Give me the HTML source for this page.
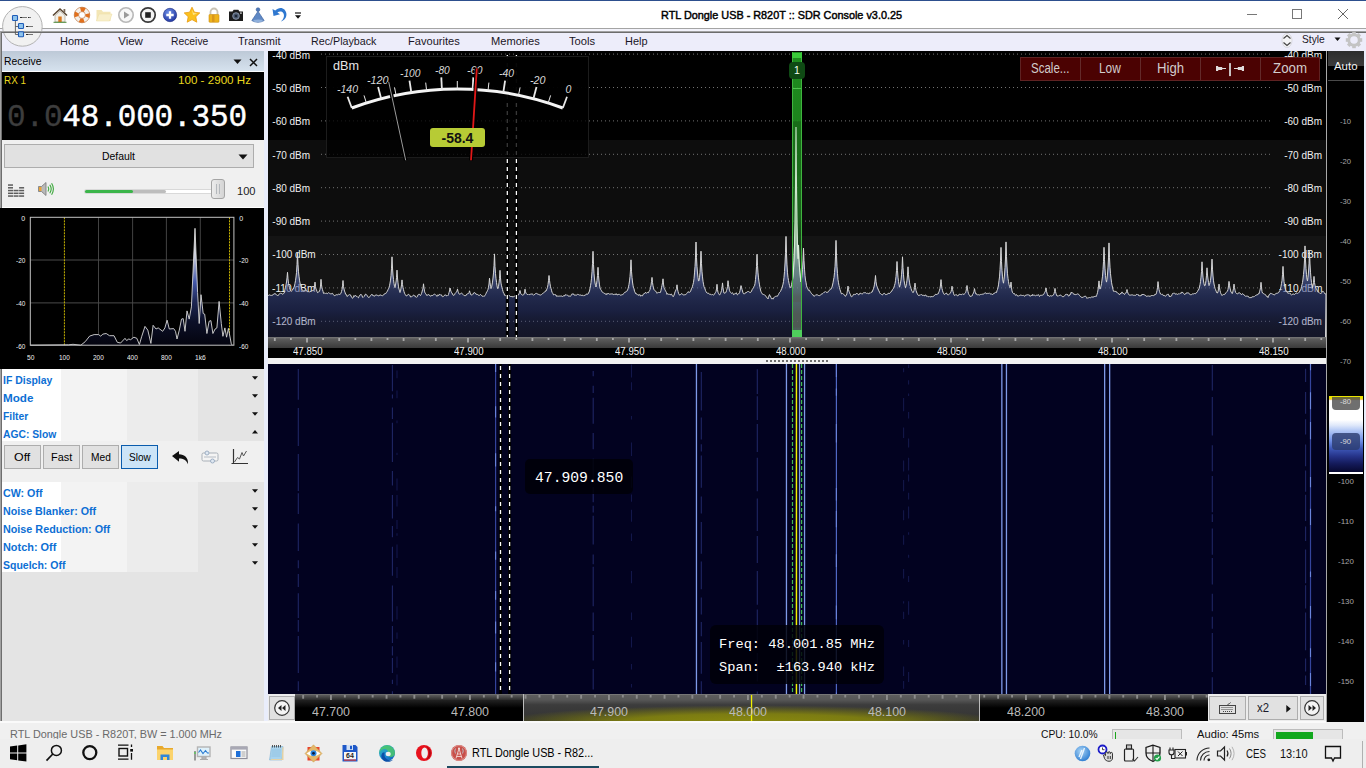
<!DOCTYPE html><html><head><meta charset="utf-8"><title>RTL Dongle USB - R820T :: SDR Console v3.0.25</title><style>
*{margin:0;padding:0;box-sizing:border-box}
html,body{width:1366px;height:768px;overflow:hidden;background:#f0f0f0;font-family:"Liberation Sans",sans-serif}
.r{position:absolute}
.t{position:absolute;white-space:nowrap;display:block}
svg{position:absolute;overflow:visible}
</style></head><body>
<div class="r" style="left:0px;top:0px;width:1366px;height:28px;background:#fff;"></div>
<div class="r" style="left:0px;top:0px;width:1366px;height:1px;background:#2d4f8e;"></div>
<div class="r" style="left:0px;top:28px;width:1366px;height:1px;background:#a4a4a4;"></div>
<div class="r" style="left:0px;top:29px;width:1366px;height:2px;background:#f3f3fb;"></div>
<div class="r" style="left:0px;top:33px;width:1366px;height:18px;background:#ededfa;"></div>
<div class="r" style="left:0px;top:31px;width:1366px;height:1px;background:#a2a2a2;"></div>
<div class="r" style="left:0px;top:32px;width:1366px;height:1px;background:#6c6c6c;"></div>
<span class="t" style='left:660.50px;top:10.00px;font:11.5px/11.5px "Liberation Sans",sans-serif;color:#000;transform:scaleX(0.9434);transform-origin:0 0;-webkit-text-stroke:0.45px #000;'>RTL Dongle USB - R820T :: SDR Console v3.0.25</span>
<svg style="left:0;top:0" width="50" height="50" viewBox="0 0 50 50"><circle cx="22.400" cy="26.400" r="19.800" fill="#f1f1f1" stroke="#b2b2b2" stroke-width="1"/></svg>
<div class="r" style="left:2px;top:31px;width:42px;height:1px;background:#a2a2a2;"></div>
<div class="r" style="left:2px;top:32px;width:42px;height:1px;background:#6c6c6c;"></div>
<svg style="left:0;top:0" width="50" height="50" viewBox="0 0 50 50"><path d="M15.400 20.500v14h3M15.400 26.500h3" stroke="#5a5a5a" stroke-width="0.900" fill="none"/><rect x="12.500" y="15.500" width="5" height="5" rx="0.800" fill="#8fc4ec" stroke="#1f5cb8" stroke-width="1.100"/><rect x="18.500" y="23.500" width="5" height="5" rx="0.800" fill="#8fc4ec" stroke="#1f5cb8" stroke-width="1.100"/><rect x="18.500" y="31.800" width="5" height="5" rx="0.800" fill="#8fc4ec" stroke="#1f5cb8" stroke-width="1.100"/><path d="M20 17.500h7M28 17.500h3M26 26.500h7M26 34.500h7" stroke="#555" stroke-width="0.800"/><path d="M20 17.500h2M28 17.500h1M26 26.500h2M26 34.500h2" stroke="#222" stroke-width="0.900"/></svg>
<svg style="left:51.0px;top:6.0px" width="18" height="18" viewBox="0 0 18 18"><path d="M2 9.500L9 3l7 6.500" fill="none" stroke="#5a4632" stroke-width="1.600"/><path d="M4 9.500L9 5l5 4.500V16H4z" fill="#f3efe6" stroke="#9a9384" stroke-width="0.600"/><rect x="7.300" y="10.500" width="3.400" height="5.500" fill="#d9781e"/><rect x="12.500" y="3" width="1.800" height="3.500" fill="#7a6a58"/><path d="M2.500 16.300h13" stroke="#4c8a3a" stroke-width="1"/></svg>
<svg style="left:73.0px;top:6.0px" width="18" height="18" viewBox="0 0 18 18"><circle cx="9" cy="9" r="5.600" fill="none" stroke="#f4f0ea" stroke-width="4.200"/><circle cx="9" cy="9" r="5.600" fill="none" stroke="#e2701c" stroke-width="4.200" stroke-dasharray="4.400 4.400" stroke-dashoffset="2.200"/><circle cx="9" cy="9" r="7.800" fill="none" stroke="#b9662a" stroke-width="0.600"/><circle cx="9" cy="9" r="3.400" fill="none" stroke="#b9662a" stroke-width="0.600"/></svg>
<svg style="left:95.0px;top:6.0px" width="18" height="18" viewBox="0 0 18 18"><path d="M1.500 4h5l1.500 1.800h7.500V15h-14z" fill="#f3e6b6"/><path d="M1.500 15l2.500-7h13l-2.500 7z" fill="#f8efcb" stroke="#ecdca0" stroke-width="0.500"/></svg>
<svg style="left:117.0px;top:6.0px" width="18" height="18" viewBox="0 0 18 18"><circle cx="9" cy="9" r="7.200" fill="#f7f7f7" stroke="#b8b8b8" stroke-width="1.600"/><path d="M7 5.500l5.500 3.500L7 12.500z" fill="#9a9a9a"/></svg>
<svg style="left:139.0px;top:6.0px" width="18" height="18" viewBox="0 0 18 18"><circle cx="9" cy="9" r="7.200" fill="#f4f4f4" stroke="#3a3a3a" stroke-width="1.700"/><rect x="6.200" y="6.200" width="5.600" height="5.600" fill="#222"/></svg>
<svg style="left:161.0px;top:6.0px" width="18" height="18" viewBox="0 0 18 18"><defs><radialGradient id="bp" cx="0.400" cy="0.300" r="0.800"><stop offset="0" stop-color="#6d8fe6"/><stop offset="1" stop-color="#1b2f9c"/></radialGradient></defs><circle cx="9" cy="9" r="6.700" fill="url(#bp)" stroke="#1a2a80" stroke-width="0.600"/><path d="M9 5.300v7.400M5.300 9h7.400" stroke="#fff" stroke-width="2.300"/></svg>
<svg style="left:183.0px;top:6.0px" width="18" height="18" viewBox="0 0 18 18"><path d="M9 1.200l2.400 5 5.400 0.700-4 3.800 1 5.500L9 13.600 4.200 16.200l1-5.500-4-3.800 5.400-0.700z" fill="#fbc11e" stroke="#e89a12" stroke-width="0.800"/><path d="M9 3.500l1.600 3.600 3.600 0.500-4.200 1.400z" fill="#fde58a"/></svg>
<svg style="left:205.0px;top:6.0px" width="18" height="18" viewBox="0 0 18 18"><path d="M5.500 8.500V6a3.500 3.500 0 017 0v2.500" fill="none" stroke="#c9c3b4" stroke-width="1.800"/><rect x="4" y="8.500" width="10" height="7.800" rx="0.800" fill="#eeb21a" stroke="#c98d10" stroke-width="0.600"/><rect x="7" y="8.800" width="2.500" height="7.200" fill="#d9961a"/></svg>
<svg style="left:227.0px;top:6.0px" width="18" height="18" viewBox="0 0 18 18"><path d="M2 5.500h3.500l1.200-1.700h4.600l1.200 1.700H16V15H2z" fill="#1c1c1c"/><circle cx="9" cy="10" r="3.300" fill="#4a586e" stroke="#8c98ac" stroke-width="0.900"/><circle cx="9" cy="10" r="1.300" fill="#1d2634"/><rect x="13" y="6.500" width="1.800" height="1.200" fill="#ddd"/></svg>
<svg style="left:249.0px;top:6.0px" width="18" height="18" viewBox="0 0 18 18"><path d="M9 5.200L2.800 14.600q6.200 3.400 12.400 0z" fill="#5f88c4" stroke="#3a62a0" stroke-width="0.600"/><circle cx="9" cy="3.600" r="1.900" fill="#4f78b8" stroke="#365c98" stroke-width="0.500"/><ellipse cx="9" cy="14.800" rx="4.800" ry="1.400" fill="#8fb0dc"/></svg>
<svg style="left:271.0px;top:6.0px" width="18" height="18" viewBox="0 0 18 18"><path d="M1.500 3l1 7 6.500-1.800-2.600-1.700c3.200-2.300 7.500-0.200 6.400 4.500-0.400 1.800-1.400 3.300-3 4.500 3.800-1.200 6-4.400 5.600-7.800C14.800 2 8.600-0.400 4.200 4.600z" fill="#2f78d0"/></svg>
<svg style="left:294.500px;top:11.500px" width="6" height="7" viewBox="0 0 6 7"><path d="M0 1h6" stroke="#111" stroke-width="1.200"/><path d="M0 3.300h6l-3 3.400z" fill="#111"/></svg>
<svg style="left:1240px;top:4px" width="120" height="22" viewBox="0 0 120 22"><path d="M7 10.500h10" stroke="#777" stroke-width="1"/><rect x="52.500" y="5.500" width="9" height="9" fill="none" stroke="#777" stroke-width="1"/><path d="M98 5l10 10M108 5l-10 10" stroke="#666" stroke-width="1"/></svg>
<span class="t" style='left:60.40px;top:36.00px;font:11.5px/11.5px "Liberation Sans",sans-serif;color:#1a1626;transform:scaleX(0.9519);transform-origin:0 0;'>Home</span>
<span class="t" style='left:118.20px;top:36.00px;font:11.5px/11.5px "Liberation Sans",sans-serif;color:#1a1626;'>View</span>
<span class="t" style='left:171.20px;top:36.00px;font:11.5px/11.5px "Liberation Sans",sans-serif;color:#1a1626;transform:scaleX(0.8978);transform-origin:0 0;'>Receive</span>
<span class="t" style='left:238.20px;top:36.00px;font:11.5px/11.5px "Liberation Sans",sans-serif;color:#1a1626;transform:scaleX(0.9594);transform-origin:0 0;'>Transmit</span>
<span class="t" style='left:311.10px;top:36.00px;font:11.5px/11.5px "Liberation Sans",sans-serif;color:#1a1626;transform:scaleX(0.9302);transform-origin:0 0;'>Rec/Playback</span>
<span class="t" style='left:407.60px;top:36.00px;font:11.5px/11.5px "Liberation Sans",sans-serif;color:#1a1626;transform:scaleX(0.9648);transform-origin:0 0;'>Favourites</span>
<span class="t" style='left:490.50px;top:36.00px;font:11.5px/11.5px "Liberation Sans",sans-serif;color:#1a1626;transform:scaleX(0.9647);transform-origin:0 0;'>Memories</span>
<span class="t" style='left:569.30px;top:36.00px;font:11.5px/11.5px "Liberation Sans",sans-serif;color:#1a1626;transform:scaleX(0.9722);transform-origin:0 0;'>Tools</span>
<span class="t" style='left:624.60px;top:36.00px;font:11.5px/11.5px "Liberation Sans",sans-serif;color:#1a1626;transform:scaleX(0.9513);transform-origin:0 0;'>Help</span>
<svg style="left:1281px;top:33px" width="12" height="15" viewBox="0 0 12 15"><ellipse cx="6" cy="7.500" rx="5" ry="7" fill="#f4f4f6" stroke="#c8c8d0" stroke-width="0.600"/><path d="M2.500 5.500L6 2.500l3.500 3M2.500 9.500L6 12.500l3.500-3" fill="none" stroke="#444" stroke-width="1.200"/></svg>
<span class="t" style='left:1301.50px;top:34.00px;font:11.5px/11.5px "Liberation Sans",sans-serif;color:#1a1626;transform:scaleX(0.8879);transform-origin:0 0;'>Style</span>
<svg style="left:1334px;top:36.500px" width="7" height="5" viewBox="0 0 7 5"><path d="M0.500 0.500h6l-3 3.500z" fill="#111"/></svg>
<svg style="left:1345px;top:31px" width="18" height="18" viewBox="-9 -9 18 18"><rect x="-1.800" y="-8.200" width="3.600" height="4" fill="#c4c4c4" transform="rotate(0)"/><rect x="-1.800" y="-8.200" width="3.600" height="4" fill="#c4c4c4" transform="rotate(45)"/><rect x="-1.800" y="-8.200" width="3.600" height="4" fill="#c4c4c4" transform="rotate(90)"/><rect x="-1.800" y="-8.200" width="3.600" height="4" fill="#c4c4c4" transform="rotate(135)"/><rect x="-1.800" y="-8.200" width="3.600" height="4" fill="#c4c4c4" transform="rotate(180)"/><rect x="-1.800" y="-8.200" width="3.600" height="4" fill="#c4c4c4" transform="rotate(225)"/><rect x="-1.800" y="-8.200" width="3.600" height="4" fill="#c4c4c4" transform="rotate(270)"/><rect x="-1.800" y="-8.200" width="3.600" height="4" fill="#c4c4c4" transform="rotate(315)"/><circle r="5.200" fill="none" stroke="#c4c4c4" stroke-width="2.800"/></svg>
<div class="r" style="left:0px;top:31px;width:1px;height:692px;background:#a2a2a2;"></div>
<div class="r" style="left:1px;top:32px;width:1px;height:691px;background:#6e6e6e;"></div>
<div class="r" style="left:264px;top:51px;width:4px;height:672px;background:#e9edfb;"></div>
<div class="r" style="left:2px;top:51px;width:262px;height:21px;background:linear-gradient(#bdc9d7,#d7e3ef);"></div>
<div class="r" style="left:2px;top:71px;width:262px;height:1px;background:#fbfcfe;"></div>
<span class="t" style='left:4.00px;top:56.00px;font:11.5px/11.5px "Liberation Sans",sans-serif;color:#000;transform:scaleX(0.9002);transform-origin:0 0;'>Receive</span>
<svg style="left:232px;top:58px" width="30" height="10" viewBox="0 0 30 10"><path d="M1.5 1.5h8l-4 4.5z" fill="#111"/><path d="M18 1l7 7M25 1l-7 7" stroke="#111" stroke-width="1.5" fill="none"/></svg>
<div class="r" style="left:2px;top:72px;width:262px;height:68px;background:#000;"></div>
<span class="t" style='left:4.00px;top:75.00px;font:11.5px/11.5px "Liberation Sans",sans-serif;color:#e8d71e;transform:scaleX(0.8605);transform-origin:0 0;'>RX 1</span>
<span class="t" style='left:178.20px;top:75.00px;font:11.5px/11.5px "Liberation Sans",sans-serif;color:#e8d71e;transform:scaleX(1.0105);transform-origin:0 0;'>100 - 2900 Hz</span>
<span class="t" style='left:7px;top:102px;font:31px/31px "Liberation Mono",monospace;color:#fff;letter-spacing:-0.15px;-webkit-text-stroke:0.45px #fff'><span style="color:#3d3d3d;-webkit-text-stroke:0.3px #3d3d3d">0.0</span>48.000.350</span>
<div class="r" style="left:2px;top:140px;width:262px;height:68px;background:#f0f0f0;"></div>
<div class="r" style="left:4px;top:144px;width:250px;height:24px;background:#e1e1e1;border:1px solid #adadad"></div>
<span class="t" style='left:101.50px;top:151.00px;font:11.5px/11.5px "Liberation Sans",sans-serif;color:#000;transform:scaleX(0.9057);transform-origin:0 0;'>Default</span>
<svg style="left:238px;top:154px" width="10" height="6" viewBox="0 0 10 6"><path d="M0.5 0.5h9l-4.5 5z" fill="#111"/></svg>
<svg style="left:7.900px;top:184px" width="17" height="14" viewBox="0 0 17 14"><rect x="0.00" y="11.30" width="5" height="1.500" fill="#5c5c5c"/><rect x="0.00" y="8.55" width="5" height="1.500" fill="#5c5c5c"/><rect x="0.00" y="5.80" width="5" height="1.500" fill="#5c5c5c"/><rect x="0.00" y="3.05" width="5" height="1.500" fill="#5c5c5c"/><rect x="0.00" y="0.30" width="5" height="1.500" fill="#5c5c5c"/><rect x="5.55" y="11.30" width="5" height="1.500" fill="#5c5c5c"/><rect x="5.55" y="8.55" width="5" height="1.500" fill="#5c5c5c"/><rect x="5.55" y="5.80" width="5" height="1.500" fill="#5c5c5c"/><rect x="11.10" y="11.30" width="5" height="1.500" fill="#5c5c5c"/><rect x="11.10" y="8.55" width="5" height="1.500" fill="#5c5c5c"/><rect x="11.10" y="5.80" width="5" height="1.500" fill="#5c5c5c"/><rect x="11.10" y="3.05" width="5" height="1.500" fill="#5c5c5c"/></svg>
<svg style="left:37px;top:180px" width="18" height="18" viewBox="0 0 18 18"><path d="M1.5 6.5h3l4.5-4v13l-4.5-4h-3z" fill="#b9b9b9" stroke="#777" stroke-width="0.8"/><path d="M2 7h2.5v4H2z" fill="#e8a33a"/><path d="M11 6.5q1.6 2.5 0 5M12.8 4.8q2.8 4.2 0 8.4M14.6 3.3q3.6 5.7 0 11.4" stroke="#3aa73a" stroke-width="1.1" fill="none"/></svg>
<div class="r" style="left:85px;top:189.5px;width:130px;height:3.5px;background:#fff;border-radius:2px;box-shadow:0 0 0 1px #d9d9d9"></div>
<div class="r" style="left:85px;top:189.5px;width:81px;height:3.5px;background:#bdbdbd;border-radius:2px"></div>
<div class="r" style="left:85px;top:189.5px;width:48px;height:3.5px;background:#3bb54a;border-radius:2px"></div>
<div class="r" style="left:211.4px;top:179px;width:13.5px;height:19.5px;background:linear-gradient(90deg,#ececec,#d4d4d4);border:1px solid #a4a4a4;border-radius:3px"></div>
<div class="r" style="left:216px;top:184px;width:1px;height:10px;background:#b4b8bc;"></div>
<div class="r" style="left:219.3px;top:184px;width:1px;height:10px;background:#b4b8bc;"></div>
<span class="t" style='left:237.00px;top:186.00px;font:11.5px/11.5px "Liberation Sans",sans-serif;color:#222;transform:scaleX(0.9642);transform-origin:0 0;'>100</span>
<div class="r" style="left:2px;top:207px;width:262px;height:1px;background:#fff;"></div>
<div class="r" style="left:0px;top:208px;width:264px;height:161px;background:#000;"></div>
<svg style="left:0;top:0" width="266" height="372" viewBox="0 0 266 372"><defs><linearGradient id="ag" gradientUnits="userSpaceOnUse" x1="0" y1="228" x2="0" y2="345"><stop offset="0" stop-color="#fff"/><stop offset="0.25" stop-color="#c4c8dc"/><stop offset="0.46" stop-color="#4458aa"/><stop offset="0.62" stop-color="#1e2856"/><stop offset="0.8" stop-color="#0c1028"/><stop offset="1" stop-color="#04040f"/></linearGradient></defs><line x1="98.5" y1="217.3" x2="98.5" y2="345.2" stroke="#424242" stroke-width="1"/><line x1="132.6" y1="217.3" x2="132.6" y2="345.2" stroke="#424242" stroke-width="1"/><line x1="166.4" y1="217.3" x2="166.4" y2="345.2" stroke="#424242" stroke-width="1"/><line x1="200.3" y1="217.3" x2="200.3" y2="345.2" stroke="#424242" stroke-width="1"/><line x1="30.3" y1="260" x2="233.9" y2="260" stroke="#4a4a4a" stroke-width="1"/><line x1="30.3" y1="302.9" x2="233.9" y2="302.9" stroke="#4a4a4a" stroke-width="1"/><line x1="64.4" y1="217.3" x2="64.4" y2="345.2" stroke="#c8b400" stroke-width="1" stroke-dasharray="2 1"/><line x1="229.5" y1="217.3" x2="229.5" y2="345.2" stroke="#c8b400" stroke-width="1" stroke-dasharray="2 1"/><path d="M30.3 345.2 L68.6 344.8 L73.0 344.3 L80.8 345.2 L85.2 341.7 L89.6 336.1 L94.1 334.6 L98.5 334.6 L100.7 336.1 L102.9 334.1 L106.2 333.5 L109.5 335.7 L114.0 335.7 L117.3 342.3 L120.6 343.0 L125.0 338.3 L126.6 340.5 L128.8 339.0 L130.6 339.7 L133.9 337.2 L136.8 338.3 L139.4 344.5 L141.6 336.8 L145.0 326.4 L147.8 330.1 L150.9 343.4 L153.1 325.3 L156.0 329.0 L158.2 327.9 L162.7 331.3 L164.9 327.9 L167.1 320.2 L169.3 329.0 L173.7 328.6 L175.5 331.3 L177.0 339.0 L179.3 330.1 L181.5 319.1 L183.2 318.6 L185.0 331.3 L187.0 310.9 L189.2 319.1 L191.4 306.9 L195.0 228.3 L197.6 292.5 L199.2 323.5 L201.0 294.7 L203.2 313.5 L204.7 314.2 L206.9 333.5 L209.1 321.3 L210.9 320.6 L212.9 333.5 L215.1 329.0 L216.9 327.9 L219.1 301.4 L221.3 323.5 L222.9 336.3 L224.9 327.9 L226.6 337.2 L228.4 328.4 L231.3 343.9 L232.4 345.2 L232.4 345.2 L30.3 345.2 Z" fill="url(#ag)"/><path d="M30.3 345.2 L68.6 344.8 L73.0 344.3 L80.8 345.2 L85.2 341.7 L89.6 336.1 L94.1 334.6 L98.5 334.6 L100.7 336.1 L102.9 334.1 L106.2 333.5 L109.5 335.7 L114.0 335.7 L117.3 342.3 L120.6 343.0 L125.0 338.3 L126.6 340.5 L128.8 339.0 L130.6 339.7 L133.9 337.2 L136.8 338.3 L139.4 344.5 L141.6 336.8 L145.0 326.4 L147.8 330.1 L150.9 343.4 L153.1 325.3 L156.0 329.0 L158.2 327.9 L162.7 331.3 L164.9 327.9 L167.1 320.2 L169.3 329.0 L173.7 328.6 L175.5 331.3 L177.0 339.0 L179.3 330.1 L181.5 319.1 L183.2 318.6 L185.0 331.3 L187.0 310.9 L189.2 319.1 L191.4 306.9 L195.0 228.3 L197.6 292.5 L199.2 323.5 L201.0 294.7 L203.2 313.5 L204.7 314.2 L206.9 333.5 L209.1 321.3 L210.9 320.6 L212.9 333.5 L215.1 329.0 L216.9 327.9 L219.1 301.4 L221.3 323.5 L222.9 336.3 L224.9 327.9 L226.6 337.2 L228.4 328.4 L231.3 343.9 L232.4 345.2" fill="none" stroke="#d8d8d8" stroke-width="0.9" stroke-linejoin="round"/><rect x="30.3" y="217.3" width="203.6" height="127.9" fill="none" stroke="#c4c4c4" stroke-width="1"/></svg>
<span class="t" style='left:21.31px;top:215.47px;font:7px/7px "Liberation Sans",sans-serif;color:#f0f0f0;'>0</span>
<span class="t" style='left:239.20px;top:215.47px;font:7px/7px "Liberation Sans",sans-serif;color:#f0f0f0;'>0</span>
<span class="t" style='left:15.90px;top:257.17px;font:7px/7px "Liberation Sans",sans-serif;color:#f0f0f0;transform:scaleX(0.9192);transform-origin:0 0;'>-20</span>
<span class="t" style='left:239.20px;top:257.17px;font:7px/7px "Liberation Sans",sans-serif;color:#f0f0f0;transform:scaleX(0.9192);transform-origin:0 0;'>-20</span>
<span class="t" style='left:15.90px;top:300.07px;font:7px/7px "Liberation Sans",sans-serif;color:#f0f0f0;transform:scaleX(0.9192);transform-origin:0 0;'>-40</span>
<span class="t" style='left:239.20px;top:300.07px;font:7px/7px "Liberation Sans",sans-serif;color:#f0f0f0;transform:scaleX(0.9192);transform-origin:0 0;'>-40</span>
<span class="t" style='left:15.90px;top:342.67px;font:7px/7px "Liberation Sans",sans-serif;color:#f0f0f0;transform:scaleX(0.9192);transform-origin:0 0;'>-60</span>
<span class="t" style='left:239.20px;top:342.67px;font:7px/7px "Liberation Sans",sans-serif;color:#f0f0f0;transform:scaleX(0.9192);transform-origin:0 0;'>-60</span>
<span class="t" style='left:26.60px;top:353.87px;font:7px/7px "Liberation Sans",sans-serif;color:#f0f0f0;transform:scaleX(0.9504);transform-origin:0 0;'>50</span>
<span class="t" style='left:59.00px;top:353.87px;font:7px/7px "Liberation Sans",sans-serif;color:#f0f0f0;transform:scaleX(0.9247);transform-origin:0 0;'>100</span>
<span class="t" style='left:93.10px;top:353.87px;font:7px/7px "Liberation Sans",sans-serif;color:#f0f0f0;transform:scaleX(0.9247);transform-origin:0 0;'>200</span>
<span class="t" style='left:127.20px;top:353.87px;font:7px/7px "Liberation Sans",sans-serif;color:#f0f0f0;transform:scaleX(0.9247);transform-origin:0 0;'>400</span>
<span class="t" style='left:161.00px;top:353.87px;font:7px/7px "Liberation Sans",sans-serif;color:#f0f0f0;transform:scaleX(0.9247);transform-origin:0 0;'>800</span>
<span class="t" style='left:194.90px;top:353.87px;font:7px/7px "Liberation Sans",sans-serif;color:#f0f0f0;transform:scaleX(0.9569);transform-origin:0 0;'>1k6</span>
<div class="r" style="left:2px;top:369px;width:262px;height:354px;background:#e4e4e4;"></div>
<div class="r" style="left:2px;top:369px;width:59px;height:18px;background:#ffffff;"></div>
<div class="r" style="left:61px;top:369px;width:66px;height:18px;background:#f3f3f3;"></div>
<div class="r" style="left:127px;top:369px;width:71px;height:18px;background:#ececec;"></div>
<div class="r" style="left:198px;top:369px;width:66px;height:18px;background:#e4e4e4;"></div>
<span class="t" style='left:3.00px;top:375.00px;font:bold 11.5px/11.5px "Liberation Sans",sans-serif;color:#0d6fd4;transform:scaleX(0.9094);transform-origin:0 0;'>IF Display</span>
<svg style="left:251.500px;top:375.5px" width="6" height="4" viewBox="0 0 6 4"><path d="M0 0.300h6l-3 3.500z" fill="#111"/></svg>
<div class="r" style="left:2px;top:387px;width:59px;height:18px;background:#ffffff;"></div>
<div class="r" style="left:61px;top:387px;width:66px;height:18px;background:#f3f3f3;"></div>
<div class="r" style="left:127px;top:387px;width:71px;height:18px;background:#ececec;"></div>
<div class="r" style="left:198px;top:387px;width:66px;height:18px;background:#e4e4e4;"></div>
<span class="t" style='left:3.00px;top:393.00px;font:bold 11.5px/11.5px "Liberation Sans",sans-serif;color:#0d6fd4;transform:scaleX(1.0125);transform-origin:0 0;'>Mode</span>
<svg style="left:251.500px;top:393.5px" width="6" height="4" viewBox="0 0 6 4"><path d="M0 0.300h6l-3 3.500z" fill="#111"/></svg>
<div class="r" style="left:2px;top:405px;width:59px;height:18px;background:#ffffff;"></div>
<div class="r" style="left:61px;top:405px;width:66px;height:18px;background:#f3f3f3;"></div>
<div class="r" style="left:127px;top:405px;width:71px;height:18px;background:#ececec;"></div>
<div class="r" style="left:198px;top:405px;width:66px;height:18px;background:#e4e4e4;"></div>
<span class="t" style='left:3.00px;top:411.00px;font:bold 11.5px/11.5px "Liberation Sans",sans-serif;color:#0d6fd4;transform:scaleX(0.8999);transform-origin:0 0;'>Filter</span>
<svg style="left:251.500px;top:411.5px" width="6" height="4" viewBox="0 0 6 4"><path d="M0 0.300h6l-3 3.500z" fill="#111"/></svg>
<div class="r" style="left:2px;top:423px;width:59px;height:18px;background:#ffffff;"></div>
<div class="r" style="left:61px;top:423px;width:66px;height:18px;background:#f3f3f3;"></div>
<div class="r" style="left:127px;top:423px;width:71px;height:18px;background:#ececec;"></div>
<div class="r" style="left:198px;top:423px;width:66px;height:18px;background:#e4e4e4;"></div>
<span class="t" style='left:3.00px;top:429.00px;font:bold 11.5px/11.5px "Liberation Sans",sans-serif;color:#0d6fd4;transform:scaleX(0.8971);transform-origin:0 0;'>AGC: Slow</span>
<svg style="left:251.500px;top:429.5px" width="6" height="4" viewBox="0 0 6 4"><path d="M0 3.500h6l-3-3.500z" fill="#111"/></svg>
<div class="r" style="left:2px;top:441px;width:262px;height:41px;background:#f0f0f0;"></div>
<div class="r" style="left:4px;top:445px;width:37px;height:24px;background:#e1e1e1;border:1px solid #adadad"></div>
<span class="t" style='left:14.35px;top:452.00px;font:11.5px/11.5px "Liberation Sans",sans-serif;color:#000;transform:scaleX(1.0775);transform-origin:0 0;'>Off</span>
<div class="r" style="left:43px;top:445px;width:37px;height:24px;background:#e1e1e1;border:1px solid #adadad"></div>
<span class="t" style='left:50.90px;top:452.00px;font:11.5px/11.5px "Liberation Sans",sans-serif;color:#000;transform:scaleX(0.9479);transform-origin:0 0;'>Fast</span>
<div class="r" style="left:82px;top:445px;width:37px;height:24px;background:#e1e1e1;border:1px solid #adadad"></div>
<span class="t" style='left:90.60px;top:452.00px;font:11.5px/11.5px "Liberation Sans",sans-serif;color:#000;transform:scaleX(0.8851);transform-origin:0 0;'>Med</span>
<div class="r" style="left:121px;top:445px;width:37px;height:24px;background:#cce4f7;border:1px solid #0a5cad"></div>
<span class="t" style='left:128.65px;top:452.00px;font:11.5px/11.5px "Liberation Sans",sans-serif;color:#000;transform:scaleX(0.8706);transform-origin:0 0;'>Slow</span>
<svg style="left:171px;top:449.500px" width="19" height="16" viewBox="0 0 19 17" preserveAspectRatio="none"><path d="M1 6.5L8 1v3.6c5.500 0.200 9.500 3.500 9 10.500c-1.800-4.500-4.500-6-9-6v3.500z" fill="#111"/></svg>
<svg style="left:201px;top:449px" width="18" height="15" viewBox="0 0 18 15"><rect x="1" y="4" width="16" height="8" rx="1.5" fill="#f4f4f4" stroke="#a9b0b8"/><circle cx="6" cy="4" r="2" fill="#dfe8f2" stroke="#9fb0c4"/><circle cx="11.500" cy="12" r="2" fill="#dfe8f2" stroke="#9fb0c4"/><path d="M3 8h12" stroke="#b6bcc4"/></svg>
<svg style="left:231px;top:449px" width="18" height="17" viewBox="0 0 18 17"><path d="M2.500 0v14.500M0.500 14.500H17" stroke="#333" stroke-width="1.2" fill="none"/><path d="M3.500 13l3-4.500 2 1.500 2.500-6.500 1.500 3.500 3-5" stroke="#555" stroke-width="1" fill="none"/></svg>
<div class="r" style="left:2px;top:482px;width:59px;height:18px;background:#ffffff;"></div>
<div class="r" style="left:61px;top:482px;width:66px;height:18px;background:#f3f3f3;"></div>
<div class="r" style="left:127px;top:482px;width:71px;height:18px;background:#ececec;"></div>
<div class="r" style="left:198px;top:482px;width:66px;height:18px;background:#e4e4e4;"></div>
<span class="t" style='left:3.00px;top:488.00px;font:bold 11.5px/11.5px "Liberation Sans",sans-serif;color:#0d6fd4;transform:scaleX(0.9277);transform-origin:0 0;'>CW: Off</span>
<svg style="left:251.500px;top:488.5px" width="6" height="4" viewBox="0 0 6 4"><path d="M0 0.300h6l-3 3.500z" fill="#111"/></svg>
<div class="r" style="left:2px;top:500px;width:59px;height:18px;background:#ffffff;"></div>
<div class="r" style="left:61px;top:500px;width:66px;height:18px;background:#f3f3f3;"></div>
<div class="r" style="left:127px;top:500px;width:71px;height:18px;background:#ececec;"></div>
<div class="r" style="left:198px;top:500px;width:66px;height:18px;background:#e4e4e4;"></div>
<span class="t" style='left:3.00px;top:506.00px;font:bold 11.5px/11.5px "Liberation Sans",sans-serif;color:#0d6fd4;transform:scaleX(0.9280);transform-origin:0 0;'>Noise Blanker: Off</span>
<svg style="left:251.500px;top:506.5px" width="6" height="4" viewBox="0 0 6 4"><path d="M0 0.300h6l-3 3.500z" fill="#111"/></svg>
<div class="r" style="left:2px;top:518px;width:59px;height:18px;background:#ffffff;"></div>
<div class="r" style="left:61px;top:518px;width:66px;height:18px;background:#f3f3f3;"></div>
<div class="r" style="left:127px;top:518px;width:71px;height:18px;background:#ececec;"></div>
<div class="r" style="left:198px;top:518px;width:66px;height:18px;background:#e4e4e4;"></div>
<span class="t" style='left:3.00px;top:524.00px;font:bold 11.5px/11.5px "Liberation Sans",sans-serif;color:#0d6fd4;transform:scaleX(0.9374);transform-origin:0 0;'>Noise Reduction: Off</span>
<svg style="left:251.500px;top:524.5px" width="6" height="4" viewBox="0 0 6 4"><path d="M0 0.300h6l-3 3.500z" fill="#111"/></svg>
<div class="r" style="left:2px;top:536px;width:59px;height:18px;background:#ffffff;"></div>
<div class="r" style="left:61px;top:536px;width:66px;height:18px;background:#f3f3f3;"></div>
<div class="r" style="left:127px;top:536px;width:71px;height:18px;background:#ececec;"></div>
<div class="r" style="left:198px;top:536px;width:66px;height:18px;background:#e4e4e4;"></div>
<span class="t" style='left:3.00px;top:542.00px;font:bold 11.5px/11.5px "Liberation Sans",sans-serif;color:#0d6fd4;transform:scaleX(0.9482);transform-origin:0 0;'>Notch: Off</span>
<svg style="left:251.500px;top:542.5px" width="6" height="4" viewBox="0 0 6 4"><path d="M0 0.300h6l-3 3.500z" fill="#111"/></svg>
<div class="r" style="left:2px;top:554px;width:59px;height:18px;background:#ffffff;"></div>
<div class="r" style="left:61px;top:554px;width:66px;height:18px;background:#f3f3f3;"></div>
<div class="r" style="left:127px;top:554px;width:71px;height:18px;background:#ececec;"></div>
<div class="r" style="left:198px;top:554px;width:66px;height:18px;background:#e4e4e4;"></div>
<span class="t" style='left:3.00px;top:560.00px;font:bold 11.5px/11.5px "Liberation Sans",sans-serif;color:#0d6fd4;transform:scaleX(0.9128);transform-origin:0 0;'>Squelch: Off</span>
<svg style="left:251.500px;top:560.5px" width="6" height="4" viewBox="0 0 6 4"><path d="M0 0.300h6l-3 3.500z" fill="#111"/></svg>
<div class="r" style="left:268px;top:51px;width:1058px;height:286px;background:#000;"></div>
<div class="r" style="left:268px;top:139.5px;width:1058px;height:96.5px;background:#0d0d0d;"></div>
<div class="r" style="left:268px;top:236px;width:1058px;height:101px;background:#141414;"></div>
<span class="t" style='left:272.30px;top:51.00px;font:10px/10px "Liberation Sans",sans-serif;color:#f0f0f0;'>-40 dBm</span>
<span class="t" style='left:1284.20px;top:51.00px;font:10px/10px "Liberation Sans",sans-serif;color:#f0f0f0;'>-40 dBm</span>
<span class="t" style='left:272.30px;top:84.00px;font:10px/10px "Liberation Sans",sans-serif;color:#f0f0f0;'>-50 dBm</span>
<span class="t" style='left:1284.20px;top:84.00px;font:10px/10px "Liberation Sans",sans-serif;color:#f0f0f0;'>-50 dBm</span>
<span class="t" style='left:272.30px;top:117.00px;font:10px/10px "Liberation Sans",sans-serif;color:#f0f0f0;'>-60 dBm</span>
<span class="t" style='left:1284.20px;top:117.00px;font:10px/10px "Liberation Sans",sans-serif;color:#f0f0f0;'>-60 dBm</span>
<span class="t" style='left:272.30px;top:151.00px;font:10px/10px "Liberation Sans",sans-serif;color:#f0f0f0;'>-70 dBm</span>
<span class="t" style='left:1284.20px;top:151.00px;font:10px/10px "Liberation Sans",sans-serif;color:#f0f0f0;'>-70 dBm</span>
<span class="t" style='left:272.30px;top:184.00px;font:10px/10px "Liberation Sans",sans-serif;color:#f0f0f0;'>-80 dBm</span>
<span class="t" style='left:1284.20px;top:184.00px;font:10px/10px "Liberation Sans",sans-serif;color:#f0f0f0;'>-80 dBm</span>
<span class="t" style='left:272.30px;top:217.00px;font:10px/10px "Liberation Sans",sans-serif;color:#f0f0f0;'>-90 dBm</span>
<span class="t" style='left:1284.20px;top:217.00px;font:10px/10px "Liberation Sans",sans-serif;color:#f0f0f0;'>-90 dBm</span>
<span class="t" style='left:272.30px;top:250.00px;font:10px/10px "Liberation Sans",sans-serif;color:#f0f0f0;'>-100 dBm</span>
<span class="t" style='left:1278.60px;top:250.00px;font:10px/10px "Liberation Sans",sans-serif;color:#f0f0f0;'>-100 dBm</span>
<span class="t" style='left:272.30px;top:284.00px;font:10px/10px "Liberation Sans",sans-serif;color:#f0f0f0;transform:scaleX(1.0185);transform-origin:0 0;'>-110 dBm</span>
<span class="t" style='left:1278.60px;top:284.00px;font:10px/10px "Liberation Sans",sans-serif;color:#f0f0f0;transform:scaleX(1.0185);transform-origin:0 0;'>-110 dBm</span>
<span class="t" style='left:272.30px;top:317.00px;font:10px/10px "Liberation Sans",sans-serif;color:#f0f0f0;'>-120 dBm</span>
<span class="t" style='left:1278.60px;top:317.00px;font:10px/10px "Liberation Sans",sans-serif;color:#f0f0f0;'>-120 dBm</span>
<svg style="left:0;top:0" width="1366" height="340" viewBox="0 0 1366 340"><defs><linearGradient id="sg" gradientUnits="userSpaceOnUse" x1="0" y1="120" x2="0" y2="337"><stop offset="0" stop-color="#ffffff"/><stop offset="0.535" stop-color="#f0f2f8"/><stop offset="0.627" stop-color="#8c96ba"/><stop offset="0.68" stop-color="#5a6894" stop-opacity="0.9"/><stop offset="0.72" stop-color="rgb(104,125,205)" stop-opacity="0.55"/><stop offset="0.783" stop-color="rgb(56,71,136)" stop-opacity="0.55"/><stop offset="0.811" stop-color="rgb(45,60,125)" stop-opacity="0.55"/><stop offset="0.843" stop-color="rgb(40,54,120)" stop-opacity="0.5"/><stop offset="0.88" stop-color="rgb(35,50,130)" stop-opacity="0.4"/><stop offset="0.917" stop-color="rgb(30,43,127)" stop-opacity="0.3"/><stop offset="0.954" stop-color="rgb(24,34,106)" stop-opacity="0.28"/><stop offset="0.99" stop-color="rgb(20,28,100)" stop-opacity="0.25"/></linearGradient><clipPath id="sc"><rect x="268" y="51" width="1058" height="286"/></clipPath></defs><line x1="321" y1="54.10" x2="1271" y2="54.10" stroke="#727272" stroke-width="1" stroke-dasharray="1 3"/><line x1="321" y1="87.50" x2="1271" y2="87.50" stroke="#727272" stroke-width="1" stroke-dasharray="1 3"/><line x1="321" y1="120.90" x2="1271" y2="120.90" stroke="#727272" stroke-width="1" stroke-dasharray="1 3"/><line x1="321" y1="154.30" x2="1271" y2="154.30" stroke="#727272" stroke-width="1" stroke-dasharray="1 3"/><line x1="321" y1="187.70" x2="1271" y2="187.70" stroke="#727272" stroke-width="1" stroke-dasharray="1 3"/><line x1="321" y1="221.10" x2="1271" y2="221.10" stroke="#727272" stroke-width="1" stroke-dasharray="1 3"/><line x1="321" y1="254.50" x2="1271" y2="254.50" stroke="#727272" stroke-width="1" stroke-dasharray="1 3"/><line x1="321" y1="287.90" x2="1271" y2="287.90" stroke="#727272" stroke-width="1" stroke-dasharray="1 3"/><line x1="321" y1="321.30" x2="1271" y2="321.30" stroke="#727272" stroke-width="1" stroke-dasharray="1 3"/><g clip-path="url(#sc)"><path d="M268.0 295.1 L268.5 295.4 L269.0 295.2 L269.5 294.9 L270.0 295.1 L270.5 295.3 L271.0 295.5 L271.5 295.4 L272.0 295.2 L272.5 295.2 L273.0 295.0 L273.5 294.1 L274.0 293.6 L274.5 293.8 L275.0 293.4 L275.5 293.7 L276.0 294.5 L276.5 295.0 L277.0 294.9 L277.5 295.5 L278.0 295.5 L278.5 295.3 L279.0 294.4 L279.5 293.9 L280.0 293.2 L280.5 293.1 L281.0 293.6 L281.5 293.4 L282.0 294.0 L282.5 294.1 L283.0 294.2 L283.5 293.6 L284.0 293.3 L284.5 291.9 L285.0 289.1 L285.5 287.2 L286.0 284.8 L286.5 282.0 L287.0 277.8 L287.5 272.3 L288.0 278.8 L288.5 283.3 L289.0 285.6 L289.5 287.6 L290.0 289.2 L290.5 290.5 L291.0 290.8 L291.5 291.4 L292.0 290.3 L292.5 289.9 L293.0 288.5 L293.5 288.8 L294.0 287.1 L294.5 286.0 L295.0 283.3 L295.5 280.7 L296.0 277.0 L296.5 272.5 L297.0 264.7 L297.5 253.2 L298.0 264.2 L298.5 271.8 L299.0 276.2 L299.5 280.2 L300.0 282.9 L300.5 285.3 L301.0 286.4 L301.5 288.2 L302.0 289.6 L302.5 290.4 L303.0 290.8 L303.5 290.8 L304.0 290.6 L304.5 290.4 L305.0 289.8 L305.5 289.9 L306.0 290.6 L306.5 290.9 L307.0 290.7 L307.5 291.4 L308.0 292.1 L308.5 291.6 L309.0 291.7 L309.5 292.0 L310.0 291.5 L310.5 291.4 L311.0 291.4 L311.5 290.7 L312.0 290.8 L312.5 290.6 L313.0 290.0 L313.5 290.4 L314.0 289.5 L314.5 286.8 L315.0 282.1 L315.5 286.7 L316.0 289.0 L316.5 289.9 L317.0 291.5 L317.5 292.6 L318.0 292.5 L318.5 291.9 L319.0 291.9 L319.5 291.1 L320.0 289.4 L320.5 286.1 L321.0 279.3 L321.5 284.9 L322.0 288.0 L322.5 289.7 L323.0 291.3 L323.5 293.4 L324.0 293.5 L324.5 293.1 L325.0 293.3 L325.5 293.4 L326.0 292.9 L326.5 293.3 L327.0 293.5 L327.5 293.6 L328.0 293.2 L328.5 292.7 L329.0 292.8 L329.5 293.3 L330.0 293.5 L330.5 293.7 L331.0 294.2 L331.5 293.6 L332.0 293.7 L332.5 293.3 L333.0 294.1 L333.5 294.8 L334.0 295.5 L334.5 295.6 L335.0 295.3 L335.5 295.2 L336.0 294.8 L336.5 294.7 L337.0 294.8 L337.5 294.8 L338.0 294.4 L338.5 294.2 L339.0 294.3 L339.5 294.4 L340.0 294.6 L340.5 293.8 L341.0 293.1 L341.5 291.5 L342.0 289.7 L342.5 285.8 L343.0 280.5 L343.5 286.5 L344.0 289.0 L344.5 291.1 L345.0 292.2 L345.5 294.0 L346.0 294.1 L346.5 295.4 L347.0 296.5 L347.5 296.1 L348.0 295.7 L348.5 295.0 L349.0 295.2 L349.5 294.6 L350.0 294.6 L350.5 294.9 L351.0 296.1 L351.5 297.1 L352.0 297.3 L352.5 298.4 L353.0 297.8 L353.5 297.2 L354.0 295.5 L354.5 296.3 L355.0 296.2 L355.5 295.5 L356.0 295.6 L356.5 296.5 L357.0 297.0 L357.5 296.8 L358.0 297.4 L358.5 297.8 L359.0 296.5 L359.5 296.0 L360.0 294.9 L360.5 294.6 L361.0 294.2 L361.5 295.0 L362.0 295.7 L362.5 297.2 L363.0 297.6 L363.5 297.1 L364.0 296.5 L364.5 296.1 L365.0 295.0 L365.5 294.1 L366.0 294.3 L366.5 294.7 L367.0 295.3 L367.5 296.2 L368.0 297.1 L368.5 297.4 L369.0 297.4 L369.5 297.0 L370.0 296.6 L370.5 295.8 L371.0 294.9 L371.5 294.5 L372.0 294.4 L372.5 294.7 L373.0 295.9 L373.5 295.7 L374.0 296.0 L374.5 296.1 L375.0 295.8 L375.5 295.0 L376.0 294.8 L376.5 295.0 L377.0 295.0 L377.5 295.3 L378.0 295.9 L378.5 296.0 L379.0 295.3 L379.5 295.3 L380.0 294.9 L380.5 295.1 L381.0 294.8 L381.5 295.5 L382.0 295.8 L382.5 295.7 L383.0 295.4 L383.5 295.1 L384.0 294.2 L384.5 293.9 L385.0 293.9 L385.5 293.5 L386.0 293.4 L386.5 292.3 L387.0 291.7 L387.5 290.9 L388.0 289.7 L388.5 288.6 L389.0 287.4 L389.5 285.8 L390.0 283.1 L390.5 280.1 L391.0 275.7 L391.5 268.2 L392.0 256.8 L392.5 268.0 L393.0 275.0 L393.5 279.6 L394.0 283.5 L394.5 286.4 L395.0 287.6 L395.5 285.1 L396.0 282.0 L396.5 277.6 L397.0 270.1 L397.5 278.0 L398.0 282.8 L398.5 286.9 L399.0 289.1 L399.5 290.9 L400.0 292.5 L400.5 291.4 L401.0 288.1 L401.5 284.9 L402.0 279.9 L402.5 284.7 L403.0 287.6 L403.5 289.7 L404.0 291.6 L404.5 293.2 L405.0 294.2 L405.5 294.9 L406.0 295.8 L406.5 296.0 L407.0 295.3 L407.5 295.2 L408.0 294.5 L408.5 294.4 L409.0 294.7 L409.5 295.0 L410.0 295.7 L410.5 297.0 L411.0 297.0 L411.5 296.7 L412.0 296.3 L412.5 296.2 L413.0 295.5 L413.5 295.2 L414.0 295.6 L414.5 295.8 L415.0 295.6 L415.5 296.8 L416.0 296.8 L416.5 297.3 L417.0 297.0 L417.5 296.3 L418.0 294.9 L418.5 294.4 L419.0 294.2 L419.5 294.3 L420.0 295.2 L420.5 295.5 L421.0 294.7 L421.5 293.6 L422.0 292.0 L422.5 289.7 L423.0 288.2 L423.5 283.8 L424.0 288.1 L424.5 291.2 L425.0 292.8 L425.5 293.5 L426.0 294.1 L426.5 295.1 L427.0 295.6 L427.5 294.9 L428.0 294.8 L428.5 294.5 L429.0 295.3 L429.5 295.3 L430.0 295.4 L430.5 296.2 L431.0 296.2 L431.5 295.4 L432.0 295.0 L432.5 295.6 L433.0 295.0 L433.5 294.7 L434.0 294.5 L434.5 294.2 L435.0 294.4 L435.5 294.7 L436.0 295.3 L436.5 295.6 L437.0 296.4 L437.5 295.6 L438.0 294.7 L438.5 295.7 L439.0 295.2 L439.5 294.4 L440.0 294.4 L440.5 295.0 L441.0 294.6 L441.5 294.9 L442.0 296.2 L442.5 296.7 L443.0 296.6 L443.5 296.4 L444.0 295.7 L444.5 295.3 L445.0 295.5 L445.5 294.8 L446.0 295.1 L446.5 295.9 L447.0 295.6 L447.5 295.0 L448.0 295.5 L448.5 294.6 L449.0 292.6 L449.5 291.0 L450.0 288.0 L450.5 290.0 L451.0 291.3 L451.5 292.7 L452.0 292.9 L452.5 294.2 L453.0 295.2 L453.5 295.2 L454.0 295.4 L454.5 294.8 L455.0 293.6 L455.5 293.0 L456.0 292.5 L456.5 291.8 L457.0 291.0 L457.5 289.1 L458.0 291.3 L458.5 292.7 L459.0 293.9 L459.5 294.2 L460.0 294.4 L460.5 294.0 L461.0 293.4 L461.5 292.9 L462.0 293.3 L462.5 293.8 L463.0 294.6 L463.5 295.1 L464.0 295.6 L464.5 295.6 L465.0 295.9 L465.5 295.6 L466.0 295.6 L466.5 294.4 L467.0 294.6 L467.5 293.8 L468.0 293.2 L468.5 293.4 L469.0 292.8 L469.5 290.8 L470.0 292.4 L470.5 294.3 L471.0 294.3 L471.5 295.0 L472.0 295.3 L472.5 294.7 L473.0 294.2 L473.5 293.0 L474.0 292.6 L474.5 292.5 L475.0 293.4 L475.5 293.3 L476.0 294.3 L476.5 294.3 L477.0 294.1 L477.5 294.5 L478.0 295.1 L478.5 295.2 L479.0 295.5 L479.5 295.4 L480.0 294.7 L480.5 294.5 L481.0 295.1 L481.5 295.4 L482.0 296.0 L482.5 296.2 L483.0 296.6 L483.5 296.1 L484.0 295.7 L484.5 296.0 L485.0 295.6 L485.5 294.6 L486.0 293.5 L486.5 292.2 L487.0 291.8 L487.5 290.5 L488.0 289.4 L488.5 287.2 L489.0 284.0 L489.5 278.2 L490.0 282.3 L490.5 286.5 L491.0 288.6 L491.5 287.7 L492.0 285.0 L492.5 282.1 L493.0 278.0 L493.5 272.9 L494.0 265.4 L494.5 253.9 L495.0 266.5 L495.5 273.5 L496.0 278.7 L496.5 282.4 L497.0 285.8 L497.5 288.4 L498.0 288.7 L498.5 286.4 L499.0 282.9 L499.5 278.5 L500.0 270.3 L500.5 277.9 L501.0 283.1 L501.5 285.8 L502.0 287.3 L502.5 289.6 L503.0 291.4 L503.5 292.9 L504.0 293.6 L504.5 295.1 L505.0 295.5 L505.5 296.1 L506.0 294.8 L506.5 295.1 L507.0 295.2 L507.5 294.3 L508.0 294.2 L508.5 295.4 L509.0 295.3 L509.5 295.6 L510.0 296.0 L510.5 296.8 L511.0 296.3 L511.5 296.6 L512.0 296.1 L512.5 297.0 L513.0 296.7 L513.5 296.7 L514.0 296.4 L514.5 296.4 L515.0 295.5 L515.5 295.5 L516.0 296.0 L516.5 296.3 L517.0 296.1 L517.5 295.4 L518.0 295.3 L518.5 295.0 L519.0 293.7 L519.5 292.4 L520.0 290.5 L520.5 293.1 L521.0 293.9 L521.5 294.5 L522.0 294.9 L522.5 295.1 L523.0 294.9 L523.5 294.9 L524.0 294.2 L524.5 292.8 L525.0 289.2 L525.5 291.6 L526.0 293.3 L526.5 293.8 L527.0 294.2 L527.5 294.5 L528.0 294.6 L528.5 294.0 L529.0 294.5 L529.5 294.6 L530.0 294.3 L530.5 294.2 L531.0 294.3 L531.5 294.0 L532.0 293.7 L532.5 294.1 L533.0 294.5 L533.5 295.3 L534.0 294.7 L534.5 294.5 L535.0 294.3 L535.5 293.6 L536.0 293.2 L536.5 293.3 L537.0 293.9 L537.5 294.0 L538.0 293.9 L538.5 294.3 L539.0 294.9 L539.5 294.8 L540.0 295.1 L540.5 295.0 L541.0 295.0 L541.5 294.6 L542.0 294.1 L542.5 293.6 L543.0 293.4 L543.5 292.9 L544.0 292.5 L544.5 292.0 L545.0 291.9 L545.5 290.9 L546.0 291.1 L546.5 289.9 L547.0 288.8 L547.5 287.5 L548.0 284.6 L548.5 280.7 L549.0 275.5 L549.5 280.3 L550.0 283.8 L550.5 286.8 L551.0 288.4 L551.5 290.2 L552.0 292.3 L552.5 292.8 L553.0 293.8 L553.5 294.9 L554.0 294.8 L554.5 294.1 L555.0 294.6 L555.5 294.9 L556.0 294.9 L556.5 296.3 L557.0 296.0 L557.5 296.1 L558.0 296.4 L558.5 296.2 L559.0 296.3 L559.5 296.1 L560.0 296.4 L560.5 296.1 L561.0 296.4 L561.5 296.0 L562.0 296.1 L562.5 296.7 L563.0 296.1 L563.5 295.8 L564.0 295.7 L564.5 296.0 L565.0 294.9 L565.5 294.9 L566.0 294.6 L566.5 295.1 L567.0 295.0 L567.5 295.1 L568.0 295.8 L568.5 296.1 L569.0 296.1 L569.5 296.1 L570.0 296.3 L570.5 296.3 L571.0 295.6 L571.5 294.4 L572.0 293.7 L572.5 294.1 L573.0 293.8 L573.5 293.9 L574.0 295.0 L574.5 295.1 L575.0 294.7 L575.5 295.1 L576.0 295.3 L576.5 295.1 L577.0 294.8 L577.5 294.4 L578.0 294.6 L578.5 294.6 L579.0 294.8 L579.5 294.9 L580.0 295.4 L580.5 294.9 L581.0 294.8 L581.5 295.5 L582.0 295.6 L582.5 295.3 L583.0 295.5 L583.5 296.1 L584.0 295.3 L584.5 295.4 L585.0 295.3 L585.5 295.1 L586.0 294.3 L586.5 294.1 L587.0 294.1 L587.5 294.2 L588.0 294.1 L588.5 293.2 L589.0 292.0 L589.5 291.0 L590.0 288.5 L590.5 285.8 L591.0 282.6 L591.5 278.2 L592.0 271.6 L592.5 263.4 L593.0 251.3 L593.5 264.4 L594.0 273.2 L594.5 279.0 L595.0 283.0 L595.5 285.4 L596.0 287.0 L596.5 284.4 L597.0 280.4 L597.5 275.4 L598.0 267.3 L598.5 275.5 L599.0 281.0 L599.5 284.9 L600.0 288.0 L600.5 289.2 L601.0 289.9 L601.5 290.7 L602.0 291.7 L602.5 292.2 L603.0 292.4 L603.5 293.0 L604.0 293.1 L604.5 293.4 L605.0 293.3 L605.5 294.3 L606.0 294.2 L606.5 294.5 L607.0 293.4 L607.5 294.1 L608.0 293.8 L608.5 293.1 L609.0 293.8 L609.5 294.3 L610.0 294.2 L610.5 294.0 L611.0 294.2 L611.5 293.9 L612.0 293.7 L612.5 294.0 L613.0 293.9 L613.5 294.6 L614.0 294.8 L614.5 294.4 L615.0 293.9 L615.5 294.5 L616.0 293.6 L616.5 294.0 L617.0 294.9 L617.5 295.0 L618.0 294.2 L618.5 294.4 L619.0 294.5 L619.5 294.3 L620.0 294.8 L620.5 295.2 L621.0 294.9 L621.5 294.9 L622.0 294.7 L622.5 294.7 L623.0 294.0 L623.5 293.8 L624.0 293.4 L624.5 292.8 L625.0 291.9 L625.5 292.2 L626.0 291.7 L626.5 291.1 L627.0 291.2 L627.5 290.3 L628.0 288.8 L628.5 286.9 L629.0 284.3 L629.5 280.9 L630.0 276.6 L630.5 269.8 L631.0 259.8 L631.5 271.2 L632.0 277.4 L632.5 282.0 L633.0 285.3 L633.5 287.9 L634.0 288.7 L634.5 291.3 L635.0 292.1 L635.5 293.5 L636.0 293.1 L636.5 293.8 L637.0 294.5 L637.5 295.1 L638.0 294.5 L638.5 295.3 L639.0 295.4 L639.5 294.7 L640.0 294.6 L640.5 296.1 L641.0 295.8 L641.5 295.6 L642.0 295.8 L642.5 295.8 L643.0 294.8 L643.5 293.9 L644.0 293.5 L644.5 293.5 L645.0 293.3 L645.5 292.2 L646.0 292.9 L646.5 293.3 L647.0 292.7 L647.5 292.5 L648.0 293.0 L648.5 292.7 L649.0 291.4 L649.5 290.7 L650.0 289.7 L650.5 287.5 L651.0 285.2 L651.5 281.5 L652.0 277.4 L652.5 282.4 L653.0 285.8 L653.5 287.9 L654.0 289.9 L654.5 290.2 L655.0 290.7 L655.5 291.0 L656.0 291.6 L656.5 292.4 L657.0 293.3 L657.5 292.7 L658.0 292.7 L658.5 292.4 L659.0 292.6 L659.5 292.5 L660.0 292.9 L660.5 292.2 L661.0 290.3 L661.5 287.6 L662.0 285.4 L662.5 282.8 L663.0 278.8 L663.5 284.1 L664.0 287.7 L664.5 288.8 L665.0 289.8 L665.5 290.8 L666.0 291.7 L666.5 292.6 L667.0 294.4 L667.5 293.7 L668.0 293.7 L668.5 294.4 L669.0 294.3 L669.5 294.2 L670.0 294.8 L670.5 294.8 L671.0 293.9 L671.5 294.2 L672.0 295.1 L672.5 295.9 L673.0 296.7 L673.5 296.4 L674.0 295.2 L674.5 293.9 L675.0 291.9 L675.5 291.0 L676.0 289.8 L676.5 288.6 L677.0 284.8 L677.5 289.1 L678.0 291.4 L678.5 293.3 L679.0 294.2 L679.5 295.1 L680.0 294.9 L680.5 294.6 L681.0 294.0 L681.5 293.7 L682.0 293.6 L682.5 294.4 L683.0 294.5 L683.5 294.9 L684.0 294.6 L684.5 294.8 L685.0 294.4 L685.5 294.6 L686.0 294.4 L686.5 293.7 L687.0 293.3 L687.5 292.4 L688.0 291.7 L688.5 291.8 L689.0 292.5 L689.5 292.0 L690.0 292.2 L690.5 291.5 L691.0 290.1 L691.5 288.4 L692.0 288.1 L692.5 286.2 L693.0 284.3 L693.5 282.3 L694.0 278.7 L694.5 272.9 L695.0 266.6 L695.5 257.1 L696.0 242.0 L696.5 257.7 L697.0 266.6 L697.5 273.0 L698.0 277.6 L698.5 281.1 L699.0 280.5 L699.5 277.8 L700.0 272.6 L700.5 264.0 L701.0 251.2 L701.5 263.6 L702.0 271.8 L702.5 276.9 L703.0 281.3 L703.5 284.2 L704.0 286.6 L704.5 287.9 L705.0 288.9 L705.5 290.6 L706.0 291.6 L706.5 292.5 L707.0 292.5 L707.5 293.3 L708.0 293.3 L708.5 293.3 L709.0 293.5 L709.5 294.3 L710.0 294.5 L710.5 294.3 L711.0 294.4 L711.5 294.9 L712.0 294.5 L712.5 294.5 L713.0 294.7 L713.5 295.0 L714.0 294.7 L714.5 294.3 L715.0 293.1 L715.5 292.4 L716.0 291.5 L716.5 288.9 L717.0 284.3 L717.5 289.7 L718.0 292.3 L718.5 293.2 L719.0 294.2 L719.5 294.9 L720.0 294.7 L720.5 293.6 L721.0 292.1 L721.5 290.6 L722.0 288.0 L722.5 282.9 L723.0 287.6 L723.5 291.2 L724.0 293.1 L724.5 293.2 L725.0 293.1 L725.5 292.8 L726.0 292.2 L726.5 290.6 L727.0 289.0 L727.5 286.6 L728.0 280.7 L728.5 284.8 L729.0 287.9 L729.5 290.7 L730.0 291.6 L730.5 292.3 L731.0 292.9 L731.5 293.4 L732.0 293.1 L732.5 292.7 L733.0 293.5 L733.5 294.6 L734.0 294.6 L734.5 293.8 L735.0 293.7 L735.5 293.6 L736.0 292.7 L736.5 293.0 L737.0 294.5 L737.5 294.7 L738.0 294.3 L738.5 293.7 L739.0 293.7 L739.5 292.7 L740.0 290.8 L740.5 288.1 L741.0 285.6 L741.5 287.2 L742.0 289.3 L742.5 291.0 L743.0 292.8 L743.5 293.7 L744.0 293.5 L744.5 293.7 L745.0 293.3 L745.5 293.2 L746.0 292.2 L746.5 292.4 L747.0 292.2 L747.5 291.6 L748.0 291.2 L748.5 291.5 L749.0 292.1 L749.5 292.0 L750.0 292.7 L750.5 292.3 L751.0 292.1 L751.5 291.5 L752.0 289.8 L752.5 289.2 L753.0 288.3 L753.5 287.7 L754.0 286.4 L754.5 285.8 L755.0 283.6 L755.5 279.4 L756.0 274.2 L756.5 266.5 L757.0 254.3 L757.5 265.5 L758.0 272.9 L758.5 277.9 L759.0 281.9 L759.5 284.9 L760.0 287.7 L760.5 290.0 L761.0 291.7 L761.5 292.7 L762.0 293.7 L762.5 294.0 L763.0 294.2 L763.5 294.5 L764.0 294.5 L764.5 294.8 L765.0 295.5 L765.5 295.7 L766.0 296.4 L766.5 297.4 L767.0 297.8 L767.5 297.9 L768.0 298.9 L768.5 297.6 L769.0 295.7 L769.5 294.6 L770.0 296.2 L770.5 296.2 L771.0 297.7 L771.5 298.8 L772.0 298.6 L772.5 298.5 L773.0 299.2 L773.5 297.9 L774.0 297.7 L774.5 296.9 L775.0 296.5 L775.5 296.4 L776.0 296.4 L776.5 296.2 L777.0 296.2 L777.5 296.2 L778.0 295.1 L778.5 294.6 L779.0 293.3 L779.5 292.5 L780.0 292.0 L780.5 291.4 L781.0 290.2 L781.5 288.9 L782.0 288.2 L782.5 285.9 L783.0 284.2 L783.5 281.5 L784.0 277.3 L784.5 271.5 L785.0 263.0 L785.5 252.5 L786.0 236.4 L786.5 253.6 L787.0 264.9 L787.5 272.8 L788.0 277.6 L788.5 280.5 L789.0 283.2 L789.5 285.5 L790.0 287.2 L790.5 288.0 L791.0 287.3 L791.5 284.7 L792.0 282.1 L792.5 279.6 L793.0 275.9 L793.5 269.9 L794.0 260.4 L794.5 246.0 L795.0 223.1 L795.5 187.3 L796.0 127.1 L796.5 187.6 L797.0 223.8 L797.5 246.5 L798.0 258.7 L798.5 244.9 L799.0 259.1 L799.5 267.7 L800.0 272.7 L800.5 278.5 L801.0 282.0 L801.5 279.3 L802.0 275.8 L802.5 269.8 L803.0 260.9 L803.5 248.0 L804.0 260.7 L804.5 269.2 L805.0 275.7 L805.5 280.1 L806.0 282.2 L806.5 285.8 L807.0 287.2 L807.5 288.1 L808.0 289.1 L808.5 290.4 L809.0 289.9 L809.5 290.3 L810.0 291.3 L810.5 292.2 L811.0 292.8 L811.5 293.6 L812.0 294.0 L812.5 294.6 L813.0 294.7 L813.5 295.9 L814.0 295.7 L814.5 296.1 L815.0 295.7 L815.5 295.1 L816.0 294.5 L816.5 294.9 L817.0 295.2 L817.5 294.9 L818.0 295.2 L818.5 295.5 L819.0 295.7 L819.5 295.6 L820.0 295.3 L820.5 295.2 L821.0 294.6 L821.5 293.9 L822.0 293.5 L822.5 293.7 L823.0 293.3 L823.5 292.7 L824.0 292.2 L824.5 292.1 L825.0 292.1 L825.5 291.6 L826.0 292.1 L826.5 292.3 L827.0 292.7 L827.5 292.1 L828.0 292.3 L828.5 291.4 L829.0 290.9 L829.5 289.9 L830.0 289.4 L830.5 289.2 L831.0 289.3 L831.5 288.1 L832.0 287.1 L832.5 285.0 L833.0 282.8 L833.5 279.9 L834.0 277.5 L834.5 272.5 L835.0 266.8 L835.5 256.2 L836.0 240.4 L836.5 255.7 L837.0 266.8 L837.5 273.6 L838.0 279.7 L838.5 282.8 L839.0 285.6 L839.5 287.6 L840.0 289.8 L840.5 291.1 L841.0 292.8 L841.5 293.9 L842.0 293.9 L842.5 293.5 L843.0 293.9 L843.5 294.1 L844.0 294.6 L844.5 295.2 L845.0 296.2 L845.5 296.1 L846.0 295.7 L846.5 295.0 L847.0 293.3 L847.5 290.0 L848.0 286.1 L848.5 289.5 L849.0 291.4 L849.5 292.5 L850.0 293.9 L850.5 294.7 L851.0 296.3 L851.5 296.8 L852.0 296.7 L852.5 296.1 L853.0 295.3 L853.5 294.4 L854.0 294.4 L854.5 294.4 L855.0 294.5 L855.5 294.5 L856.0 294.0 L856.5 293.2 L857.0 293.8 L857.5 293.7 L858.0 294.2 L858.5 294.9 L859.0 294.8 L859.5 293.8 L860.0 293.1 L860.5 293.3 L861.0 293.3 L861.5 293.9 L862.0 294.2 L862.5 293.8 L863.0 293.4 L863.5 292.7 L864.0 292.7 L864.5 292.7 L865.0 292.8 L865.5 292.7 L866.0 292.9 L866.5 293.4 L867.0 293.0 L867.5 293.1 L868.0 293.7 L868.5 293.8 L869.0 293.2 L869.5 293.1 L870.0 293.5 L870.5 293.0 L871.0 292.4 L871.5 292.2 L872.0 292.3 L872.5 291.0 L873.0 289.9 L873.5 288.7 L874.0 287.0 L874.5 284.2 L875.0 281.0 L875.5 275.5 L876.0 281.5 L876.5 285.1 L877.0 286.3 L877.5 287.7 L878.0 289.0 L878.5 290.2 L879.0 291.0 L879.5 292.5 L880.0 293.5 L880.5 293.6 L881.0 294.1 L881.5 294.4 L882.0 294.9 L882.5 294.8 L883.0 294.5 L883.5 293.6 L884.0 293.8 L884.5 293.4 L885.0 293.7 L885.5 294.6 L886.0 294.8 L886.5 294.5 L887.0 293.9 L887.5 294.0 L888.0 293.6 L888.5 293.2 L889.0 294.0 L889.5 293.3 L890.0 293.0 L890.5 292.6 L891.0 292.0 L891.5 291.1 L892.0 290.9 L892.5 289.6 L893.0 289.2 L893.5 288.3 L894.0 287.3 L894.5 285.3 L895.0 283.8 L895.5 280.7 L896.0 276.4 L896.5 270.5 L897.0 261.5 L897.5 270.6 L898.0 277.2 L898.5 281.5 L899.0 284.5 L899.5 287.2 L900.0 285.6 L900.5 283.2 L901.0 279.9 L901.5 274.8 L902.0 268.2 L902.5 256.8 L903.0 267.7 L903.5 274.8 L904.0 280.3 L904.5 283.0 L905.0 285.7 L905.5 287.8 L906.0 286.0 L906.5 283.7 L907.0 280.1 L907.5 275.1 L908.0 266.8 L908.5 274.7 L909.0 279.0 L909.5 282.2 L910.0 285.3 L910.5 286.3 L911.0 288.4 L911.5 290.1 L912.0 291.4 L912.5 291.8 L913.0 292.7 L913.5 292.2 L914.0 290.6 L914.5 287.5 L915.0 283.1 L915.5 287.5 L916.0 290.4 L916.5 292.0 L917.0 293.2 L917.5 294.1 L918.0 295.1 L918.5 295.5 L919.0 295.5 L919.5 295.2 L920.0 295.3 L920.5 294.8 L921.0 294.5 L921.5 294.6 L922.0 294.8 L922.5 295.2 L923.0 295.8 L923.5 294.9 L924.0 295.4 L924.5 295.8 L925.0 295.0 L925.5 294.9 L926.0 295.8 L926.5 296.1 L927.0 295.8 L927.5 296.3 L928.0 296.7 L928.5 296.7 L929.0 296.7 L929.5 296.2 L930.0 296.7 L930.5 297.1 L931.0 296.3 L931.5 296.5 L932.0 297.1 L932.5 296.6 L933.0 296.2 L933.5 296.3 L934.0 295.9 L934.5 295.3 L935.0 295.1 L935.5 294.3 L936.0 294.5 L936.5 294.5 L937.0 294.5 L937.5 294.0 L938.0 294.1 L938.5 292.8 L939.0 291.8 L939.5 290.2 L940.0 288.4 L940.5 285.0 L941.0 279.6 L941.5 284.8 L942.0 288.5 L942.5 290.7 L943.0 292.2 L943.5 293.2 L944.0 294.3 L944.5 294.4 L945.0 294.0 L945.5 293.6 L946.0 293.3 L946.5 293.0 L947.0 294.0 L947.5 294.7 L948.0 295.1 L948.5 294.9 L949.0 294.4 L949.5 293.9 L950.0 293.2 L950.5 292.8 L951.0 291.8 L951.5 289.6 L952.0 286.2 L952.5 289.2 L953.0 291.4 L953.5 293.3 L954.0 294.9 L954.5 295.3 L955.0 295.3 L955.5 294.8 L956.0 294.7 L956.5 294.7 L957.0 295.4 L957.5 295.9 L958.0 295.9 L958.5 295.0 L959.0 294.3 L959.5 294.3 L960.0 294.5 L960.5 294.4 L961.0 295.0 L961.5 294.6 L962.0 294.4 L962.5 293.9 L963.0 293.9 L963.5 294.3 L964.0 294.5 L964.5 293.8 L965.0 293.4 L965.5 292.8 L966.0 291.2 L966.5 288.7 L967.0 285.5 L967.5 289.1 L968.0 291.7 L968.5 293.7 L969.0 294.7 L969.5 295.4 L970.0 296.5 L970.5 296.3 L971.0 296.5 L971.5 296.0 L972.0 296.1 L972.5 294.5 L973.0 293.9 L973.5 292.9 L974.0 291.3 L974.5 288.6 L975.0 291.4 L975.5 292.8 L976.0 294.2 L976.5 294.0 L977.0 294.3 L977.5 295.0 L978.0 294.9 L978.5 294.7 L979.0 295.0 L979.5 295.0 L980.0 294.9 L980.5 294.4 L981.0 294.8 L981.5 294.3 L982.0 294.2 L982.5 294.2 L983.0 294.1 L983.5 294.0 L984.0 293.6 L984.5 293.3 L985.0 293.2 L985.5 292.9 L986.0 292.9 L986.5 293.7 L987.0 293.9 L987.5 293.3 L988.0 293.1 L988.5 293.4 L989.0 293.2 L989.5 293.0 L990.0 293.6 L990.5 294.0 L991.0 293.7 L991.5 294.0 L992.0 294.3 L992.5 294.5 L993.0 294.5 L993.5 293.8 L994.0 293.0 L994.5 293.1 L995.0 292.8 L995.5 292.4 L996.0 292.5 L996.5 292.5 L997.0 290.6 L997.5 289.5 L998.0 287.6 L998.5 284.9 L999.0 280.7 L999.5 276.9 L1000.0 269.7 L1000.5 260.7 L1001.0 247.4 L1001.5 261.7 L1002.0 270.6 L1002.5 276.9 L1003.0 281.3 L1003.5 283.2 L1004.0 279.4 L1004.5 275.0 L1005.0 267.3 L1005.5 258.0 L1006.0 241.9 L1006.5 256.6 L1007.0 266.0 L1007.5 273.8 L1008.0 278.3 L1008.5 281.7 L1009.0 284.5 L1009.5 286.4 L1010.0 287.7 L1010.5 286.4 L1011.0 282.1 L1011.5 287.8 L1012.0 290.9 L1012.5 292.5 L1013.0 292.8 L1013.5 293.7 L1014.0 293.7 L1014.5 293.6 L1015.0 294.6 L1015.5 295.4 L1016.0 294.7 L1016.5 294.7 L1017.0 295.6 L1017.5 295.8 L1018.0 295.5 L1018.5 296.1 L1019.0 296.1 L1019.5 295.6 L1020.0 295.0 L1020.5 295.1 L1021.0 295.2 L1021.5 295.3 L1022.0 295.2 L1022.5 295.5 L1023.0 295.6 L1023.5 295.3 L1024.0 295.9 L1024.5 296.2 L1025.0 296.1 L1025.5 295.2 L1026.0 295.3 L1026.5 295.0 L1027.0 294.6 L1027.5 294.8 L1028.0 294.8 L1028.5 294.9 L1029.0 295.0 L1029.5 295.1 L1030.0 296.4 L1030.5 296.1 L1031.0 295.5 L1031.5 295.3 L1032.0 296.0 L1032.5 294.6 L1033.0 294.6 L1033.5 295.2 L1034.0 295.6 L1034.5 295.0 L1035.0 295.3 L1035.5 295.9 L1036.0 295.8 L1036.5 295.4 L1037.0 294.8 L1037.5 295.3 L1038.0 295.4 L1038.5 294.6 L1039.0 295.5 L1039.5 296.5 L1040.0 295.9 L1040.5 295.2 L1041.0 295.2 L1041.5 295.3 L1042.0 295.4 L1042.5 295.1 L1043.0 295.0 L1043.5 294.6 L1044.0 293.8 L1044.5 292.6 L1045.0 292.1 L1045.5 290.4 L1046.0 287.9 L1046.5 291.3 L1047.0 293.1 L1047.5 294.8 L1048.0 296.0 L1048.5 295.6 L1049.0 295.6 L1049.5 296.4 L1050.0 296.0 L1050.5 295.7 L1051.0 295.9 L1051.5 296.0 L1052.0 295.6 L1052.5 295.7 L1053.0 295.1 L1053.5 294.9 L1054.0 293.7 L1054.5 291.6 L1055.0 288.4 L1055.5 291.6 L1056.0 293.5 L1056.5 294.9 L1057.0 296.0 L1057.5 296.0 L1058.0 296.4 L1058.5 296.0 L1059.0 295.5 L1059.5 295.4 L1060.0 295.4 L1060.5 295.1 L1061.0 295.3 L1061.5 295.8 L1062.0 296.0 L1062.5 296.7 L1063.0 296.8 L1063.5 296.6 L1064.0 296.5 L1064.5 296.0 L1065.0 295.2 L1065.5 294.5 L1066.0 294.3 L1066.5 294.2 L1067.0 294.7 L1067.5 294.2 L1068.0 295.3 L1068.5 296.1 L1069.0 296.0 L1069.5 294.9 L1070.0 295.1 L1070.5 293.8 L1071.0 292.6 L1071.5 292.0 L1072.0 293.3 L1072.5 292.7 L1073.0 293.3 L1073.5 293.7 L1074.0 294.6 L1074.5 294.2 L1075.0 294.9 L1075.5 294.6 L1076.0 294.6 L1076.5 294.4 L1077.0 294.2 L1077.5 293.9 L1078.0 294.3 L1078.5 294.3 L1079.0 294.6 L1079.5 295.5 L1080.0 296.2 L1080.5 296.4 L1081.0 297.1 L1081.5 297.3 L1082.0 297.1 L1082.5 297.4 L1083.0 297.6 L1083.5 297.0 L1084.0 296.3 L1084.5 296.4 L1085.0 296.3 L1085.5 296.3 L1086.0 296.5 L1086.5 297.4 L1087.0 298.4 L1087.5 297.9 L1088.0 297.7 L1088.5 297.8 L1089.0 297.5 L1089.5 297.5 L1090.0 297.9 L1090.5 297.7 L1091.0 297.4 L1091.5 297.0 L1092.0 296.8 L1092.5 296.8 L1093.0 297.5 L1093.5 296.9 L1094.0 296.2 L1094.5 296.5 L1095.0 296.2 L1095.5 296.1 L1096.0 296.7 L1096.5 295.8 L1097.0 294.3 L1097.5 292.7 L1098.0 290.0 L1098.5 286.0 L1099.0 280.9 L1099.5 287.1 L1100.0 289.1 L1100.5 287.9 L1101.0 286.1 L1101.5 283.7 L1102.0 280.0 L1102.5 276.2 L1103.0 269.5 L1103.5 261.5 L1104.0 247.3 L1104.5 259.7 L1105.0 268.8 L1105.5 275.4 L1106.0 279.8 L1106.5 282.1 L1107.0 279.3 L1107.5 274.0 L1108.0 267.1 L1108.5 257.9 L1109.0 242.9 L1109.5 257.7 L1110.0 267.2 L1110.5 273.7 L1111.0 278.1 L1111.5 282.2 L1112.0 285.1 L1112.5 287.1 L1113.0 289.6 L1113.5 291.3 L1114.0 291.5 L1114.5 291.3 L1115.0 291.2 L1115.5 291.4 L1116.0 291.2 L1116.5 292.3 L1117.0 292.5 L1117.5 292.7 L1118.0 293.4 L1118.5 293.6 L1119.0 294.1 L1119.5 294.9 L1120.0 294.1 L1120.5 293.1 L1121.0 293.6 L1121.5 292.8 L1122.0 291.9 L1122.5 293.1 L1123.0 293.6 L1123.5 293.5 L1124.0 294.1 L1124.5 294.5 L1125.0 293.6 L1125.5 293.1 L1126.0 293.0 L1126.5 291.5 L1127.0 289.5 L1127.5 291.8 L1128.0 293.2 L1128.5 294.2 L1129.0 294.9 L1129.5 295.1 L1130.0 295.0 L1130.5 295.1 L1131.0 294.9 L1131.5 294.9 L1132.0 295.1 L1132.5 294.9 L1133.0 294.9 L1133.5 295.3 L1134.0 295.4 L1134.5 295.3 L1135.0 295.5 L1135.5 295.4 L1136.0 295.0 L1136.5 294.4 L1137.0 294.7 L1137.5 294.0 L1138.0 294.6 L1138.5 294.9 L1139.0 296.0 L1139.5 295.7 L1140.0 296.2 L1140.5 295.6 L1141.0 295.9 L1141.5 294.8 L1142.0 295.1 L1142.5 294.0 L1143.0 294.8 L1143.5 294.0 L1144.0 294.8 L1144.5 294.9 L1145.0 295.5 L1145.5 295.4 L1146.0 296.2 L1146.5 296.3 L1147.0 296.1 L1147.5 296.1 L1148.0 296.3 L1148.5 296.0 L1149.0 296.3 L1149.5 296.2 L1150.0 296.6 L1150.5 295.9 L1151.0 296.2 L1151.5 295.3 L1152.0 295.9 L1152.5 295.5 L1153.0 295.7 L1153.5 295.6 L1154.0 295.5 L1154.5 295.2 L1155.0 294.2 L1155.5 294.7 L1156.0 294.1 L1156.5 292.8 L1157.0 290.7 L1157.5 287.3 L1158.0 281.6 L1158.5 286.1 L1159.0 289.5 L1159.5 291.6 L1160.0 292.8 L1160.5 294.0 L1161.0 293.9 L1161.5 294.4 L1162.0 294.3 L1162.5 294.3 L1163.0 294.7 L1163.5 295.9 L1164.0 295.4 L1164.5 295.6 L1165.0 296.0 L1165.5 296.3 L1166.0 295.5 L1166.5 295.1 L1167.0 294.9 L1167.5 294.4 L1168.0 293.9 L1168.5 295.1 L1169.0 295.1 L1169.5 296.9 L1170.0 296.3 L1170.5 296.4 L1171.0 296.5 L1171.5 295.9 L1172.0 294.6 L1172.5 293.6 L1173.0 293.7 L1173.5 293.1 L1174.0 292.9 L1174.5 293.1 L1175.0 293.8 L1175.5 294.1 L1176.0 293.9 L1176.5 293.9 L1177.0 294.2 L1177.5 294.4 L1178.0 294.0 L1178.5 293.8 L1179.0 294.2 L1179.5 294.0 L1180.0 293.5 L1180.5 293.2 L1181.0 293.4 L1181.5 293.1 L1182.0 291.9 L1182.5 292.5 L1183.0 292.7 L1183.5 293.3 L1184.0 293.7 L1184.5 294.6 L1185.0 294.1 L1185.5 293.8 L1186.0 293.8 L1186.5 292.8 L1187.0 292.8 L1187.5 292.9 L1188.0 292.9 L1188.5 292.8 L1189.0 293.5 L1189.5 294.1 L1190.0 294.2 L1190.5 294.8 L1191.0 295.0 L1191.5 294.6 L1192.0 294.2 L1192.5 293.9 L1193.0 293.8 L1193.5 293.9 L1194.0 293.8 L1194.5 293.5 L1195.0 293.8 L1195.5 293.7 L1196.0 292.9 L1196.5 292.6 L1197.0 292.4 L1197.5 291.5 L1198.0 290.2 L1198.5 290.0 L1199.0 288.8 L1199.5 287.0 L1200.0 284.6 L1200.5 281.7 L1201.0 277.1 L1201.5 271.5 L1202.0 261.8 L1202.5 270.8 L1203.0 277.1 L1203.5 281.0 L1204.0 283.8 L1204.5 285.7 L1205.0 285.7 L1205.5 283.8 L1206.0 280.4 L1206.5 275.2 L1207.0 267.8 L1207.5 275.0 L1208.0 279.0 L1208.5 282.5 L1209.0 285.6 L1209.5 284.6 L1210.0 282.5 L1210.5 280.4 L1211.0 276.0 L1211.5 269.0 L1212.0 259.1 L1212.5 269.2 L1213.0 276.0 L1213.5 280.8 L1214.0 284.0 L1214.5 286.2 L1215.0 288.4 L1215.5 289.3 L1216.0 291.0 L1216.5 291.9 L1217.0 293.0 L1217.5 293.0 L1218.0 291.8 L1218.5 288.9 L1219.0 284.1 L1219.5 287.8 L1220.0 290.6 L1220.5 292.5 L1221.0 293.8 L1221.5 294.7 L1222.0 295.5 L1222.5 294.9 L1223.0 294.8 L1223.5 294.5 L1224.0 294.7 L1224.5 294.6 L1225.0 294.1 L1225.5 293.1 L1226.0 292.8 L1226.5 292.3 L1227.0 291.6 L1227.5 291.1 L1228.0 289.4 L1228.5 285.9 L1229.0 281.4 L1229.5 285.2 L1230.0 288.0 L1230.5 290.1 L1231.0 292.2 L1231.5 292.4 L1232.0 293.6 L1232.5 293.3 L1233.0 291.0 L1233.5 288.3 L1234.0 284.1 L1234.5 287.7 L1235.0 290.2 L1235.5 292.3 L1236.0 292.7 L1236.5 293.4 L1237.0 294.1 L1237.5 293.9 L1238.0 293.3 L1238.5 293.0 L1239.0 292.6 L1239.5 292.7 L1240.0 293.5 L1240.5 293.6 L1241.0 294.0 L1241.5 294.7 L1242.0 294.0 L1242.5 293.7 L1243.0 294.1 L1243.5 294.5 L1244.0 294.6 L1244.5 295.5 L1245.0 295.6 L1245.5 296.3 L1246.0 296.1 L1246.5 296.1 L1247.0 296.2 L1247.5 296.2 L1248.0 296.0 L1248.5 296.7 L1249.0 297.1 L1249.5 298.1 L1250.0 297.5 L1250.5 297.6 L1251.0 297.4 L1251.5 297.6 L1252.0 296.7 L1252.5 296.8 L1253.0 297.1 L1253.5 296.7 L1254.0 296.3 L1254.5 296.4 L1255.0 295.9 L1255.5 295.5 L1256.0 295.3 L1256.5 295.0 L1257.0 295.0 L1257.5 294.8 L1258.0 293.9 L1258.5 293.8 L1259.0 293.9 L1259.5 291.7 L1260.0 290.1 L1260.5 287.6 L1261.0 282.3 L1261.5 286.9 L1262.0 291.7 L1262.5 293.0 L1263.0 293.3 L1263.5 293.5 L1264.0 294.3 L1264.5 294.0 L1265.0 294.5 L1265.5 294.8 L1266.0 295.5 L1266.5 296.2 L1267.0 296.9 L1267.5 296.5 L1268.0 297.6 L1268.5 296.4 L1269.0 295.0 L1269.5 294.3 L1270.0 294.3 L1270.5 293.3 L1271.0 293.3 L1271.5 293.6 L1272.0 294.0 L1272.5 293.9 L1273.0 294.6 L1273.5 294.5 L1274.0 295.2 L1274.5 294.9 L1275.0 294.3 L1275.5 293.8 L1276.0 293.9 L1276.5 293.2 L1277.0 293.2 L1277.5 293.2 L1278.0 293.1 L1278.5 292.7 L1279.0 292.0 L1279.5 291.0 L1280.0 290.3 L1280.5 289.0 L1281.0 286.4 L1281.5 283.4 L1282.0 280.7 L1282.5 274.4 L1283.0 266.4 L1283.5 275.0 L1284.0 281.5 L1284.5 285.0 L1285.0 287.7 L1285.5 289.4 L1286.0 291.0 L1286.5 291.3 L1287.0 291.6 L1287.5 292.8 L1288.0 293.5 L1288.5 293.1 L1289.0 292.8 L1289.5 293.0 L1290.0 293.6 L1290.5 293.6 L1291.0 294.7 L1291.5 295.1 L1292.0 294.6 L1292.5 294.3 L1293.0 293.9 L1293.5 294.1 L1294.0 293.9 L1294.5 294.5 L1295.0 294.2 L1295.5 293.4 L1296.0 293.2 L1296.5 293.1 L1297.0 292.9 L1297.5 293.4 L1298.0 293.0 L1298.5 292.8 L1299.0 292.3 L1299.5 292.0 L1300.0 290.3 L1300.5 290.3 L1301.0 288.9 L1301.5 286.6 L1302.0 284.5 L1302.5 282.6 L1303.0 279.0 L1303.5 274.4 L1304.0 269.0 L1304.5 260.1 L1305.0 245.9 L1305.5 259.9 L1306.0 268.6 L1306.5 274.7 L1307.0 279.2 L1307.5 281.0 L1308.0 277.3 L1308.5 272.0 L1309.0 263.8 L1309.5 251.4 L1310.0 264.0 L1310.5 272.2 L1311.0 278.3 L1311.5 282.5 L1312.0 285.5 L1312.5 288.2 L1313.0 285.7 L1313.5 282.3 L1314.0 276.4 L1314.5 282.6 L1315.0 285.3 L1315.5 286.8 L1316.0 288.3 L1316.5 289.0 L1317.0 289.9 L1317.5 291.2 L1318.0 292.3 L1318.5 292.2 L1319.0 292.5 L1319.5 292.8 L1320.0 293.5 L1320.5 293.4 L1321.0 293.7 L1321.5 293.1 L1322.0 292.1 L1322.5 291.3 L1323.0 291.1 L1323.5 291.8 L1324.0 292.6 L1324.5 293.0 L1325.0 293.9 L1325.5 293.9 L1326.0 294.0 L1325.5 337.0 L1326 337 L268 337 Z" fill="url(#sg)"/><path d="M268.0 295.1 L268.5 295.4 L269.0 295.2 L269.5 294.9 L270.0 295.1 L270.5 295.3 L271.0 295.5 L271.5 295.4 L272.0 295.2 L272.5 295.2 L273.0 295.0 L273.5 294.1 L274.0 293.6 L274.5 293.8 L275.0 293.4 L275.5 293.7 L276.0 294.5 L276.5 295.0 L277.0 294.9 L277.5 295.5 L278.0 295.5 L278.5 295.3 L279.0 294.4 L279.5 293.9 L280.0 293.2 L280.5 293.1 L281.0 293.6 L281.5 293.4 L282.0 294.0 L282.5 294.1 L283.0 294.2 L283.5 293.6 L284.0 293.3 L284.5 291.9 L285.0 289.1 L285.5 287.2 L286.0 284.8 L286.5 282.0 L287.0 277.8 L287.5 272.3 L288.0 278.8 L288.5 283.3 L289.0 285.6 L289.5 287.6 L290.0 289.2 L290.5 290.5 L291.0 290.8 L291.5 291.4 L292.0 290.3 L292.5 289.9 L293.0 288.5 L293.5 288.8 L294.0 287.1 L294.5 286.0 L295.0 283.3 L295.5 280.7 L296.0 277.0 L296.5 272.5 L297.0 264.7 L297.5 253.2 L298.0 264.2 L298.5 271.8 L299.0 276.2 L299.5 280.2 L300.0 282.9 L300.5 285.3 L301.0 286.4 L301.5 288.2 L302.0 289.6 L302.5 290.4 L303.0 290.8 L303.5 290.8 L304.0 290.6 L304.5 290.4 L305.0 289.8 L305.5 289.9 L306.0 290.6 L306.5 290.9 L307.0 290.7 L307.5 291.4 L308.0 292.1 L308.5 291.6 L309.0 291.7 L309.5 292.0 L310.0 291.5 L310.5 291.4 L311.0 291.4 L311.5 290.7 L312.0 290.8 L312.5 290.6 L313.0 290.0 L313.5 290.4 L314.0 289.5 L314.5 286.8 L315.0 282.1 L315.5 286.7 L316.0 289.0 L316.5 289.9 L317.0 291.5 L317.5 292.6 L318.0 292.5 L318.5 291.9 L319.0 291.9 L319.5 291.1 L320.0 289.4 L320.5 286.1 L321.0 279.3 L321.5 284.9 L322.0 288.0 L322.5 289.7 L323.0 291.3 L323.5 293.4 L324.0 293.5 L324.5 293.1 L325.0 293.3 L325.5 293.4 L326.0 292.9 L326.5 293.3 L327.0 293.5 L327.5 293.6 L328.0 293.2 L328.5 292.7 L329.0 292.8 L329.5 293.3 L330.0 293.5 L330.5 293.7 L331.0 294.2 L331.5 293.6 L332.0 293.7 L332.5 293.3 L333.0 294.1 L333.5 294.8 L334.0 295.5 L334.5 295.6 L335.0 295.3 L335.5 295.2 L336.0 294.8 L336.5 294.7 L337.0 294.8 L337.5 294.8 L338.0 294.4 L338.5 294.2 L339.0 294.3 L339.5 294.4 L340.0 294.6 L340.5 293.8 L341.0 293.1 L341.5 291.5 L342.0 289.7 L342.5 285.8 L343.0 280.5 L343.5 286.5 L344.0 289.0 L344.5 291.1 L345.0 292.2 L345.5 294.0 L346.0 294.1 L346.5 295.4 L347.0 296.5 L347.5 296.1 L348.0 295.7 L348.5 295.0 L349.0 295.2 L349.5 294.6 L350.0 294.6 L350.5 294.9 L351.0 296.1 L351.5 297.1 L352.0 297.3 L352.5 298.4 L353.0 297.8 L353.5 297.2 L354.0 295.5 L354.5 296.3 L355.0 296.2 L355.5 295.5 L356.0 295.6 L356.5 296.5 L357.0 297.0 L357.5 296.8 L358.0 297.4 L358.5 297.8 L359.0 296.5 L359.5 296.0 L360.0 294.9 L360.5 294.6 L361.0 294.2 L361.5 295.0 L362.0 295.7 L362.5 297.2 L363.0 297.6 L363.5 297.1 L364.0 296.5 L364.5 296.1 L365.0 295.0 L365.5 294.1 L366.0 294.3 L366.5 294.7 L367.0 295.3 L367.5 296.2 L368.0 297.1 L368.5 297.4 L369.0 297.4 L369.5 297.0 L370.0 296.6 L370.5 295.8 L371.0 294.9 L371.5 294.5 L372.0 294.4 L372.5 294.7 L373.0 295.9 L373.5 295.7 L374.0 296.0 L374.5 296.1 L375.0 295.8 L375.5 295.0 L376.0 294.8 L376.5 295.0 L377.0 295.0 L377.5 295.3 L378.0 295.9 L378.5 296.0 L379.0 295.3 L379.5 295.3 L380.0 294.9 L380.5 295.1 L381.0 294.8 L381.5 295.5 L382.0 295.8 L382.5 295.7 L383.0 295.4 L383.5 295.1 L384.0 294.2 L384.5 293.9 L385.0 293.9 L385.5 293.5 L386.0 293.4 L386.5 292.3 L387.0 291.7 L387.5 290.9 L388.0 289.7 L388.5 288.6 L389.0 287.4 L389.5 285.8 L390.0 283.1 L390.5 280.1 L391.0 275.7 L391.5 268.2 L392.0 256.8 L392.5 268.0 L393.0 275.0 L393.5 279.6 L394.0 283.5 L394.5 286.4 L395.0 287.6 L395.5 285.1 L396.0 282.0 L396.5 277.6 L397.0 270.1 L397.5 278.0 L398.0 282.8 L398.5 286.9 L399.0 289.1 L399.5 290.9 L400.0 292.5 L400.5 291.4 L401.0 288.1 L401.5 284.9 L402.0 279.9 L402.5 284.7 L403.0 287.6 L403.5 289.7 L404.0 291.6 L404.5 293.2 L405.0 294.2 L405.5 294.9 L406.0 295.8 L406.5 296.0 L407.0 295.3 L407.5 295.2 L408.0 294.5 L408.5 294.4 L409.0 294.7 L409.5 295.0 L410.0 295.7 L410.5 297.0 L411.0 297.0 L411.5 296.7 L412.0 296.3 L412.5 296.2 L413.0 295.5 L413.5 295.2 L414.0 295.6 L414.5 295.8 L415.0 295.6 L415.5 296.8 L416.0 296.8 L416.5 297.3 L417.0 297.0 L417.5 296.3 L418.0 294.9 L418.5 294.4 L419.0 294.2 L419.5 294.3 L420.0 295.2 L420.5 295.5 L421.0 294.7 L421.5 293.6 L422.0 292.0 L422.5 289.7 L423.0 288.2 L423.5 283.8 L424.0 288.1 L424.5 291.2 L425.0 292.8 L425.5 293.5 L426.0 294.1 L426.5 295.1 L427.0 295.6 L427.5 294.9 L428.0 294.8 L428.5 294.5 L429.0 295.3 L429.5 295.3 L430.0 295.4 L430.5 296.2 L431.0 296.2 L431.5 295.4 L432.0 295.0 L432.5 295.6 L433.0 295.0 L433.5 294.7 L434.0 294.5 L434.5 294.2 L435.0 294.4 L435.5 294.7 L436.0 295.3 L436.5 295.6 L437.0 296.4 L437.5 295.6 L438.0 294.7 L438.5 295.7 L439.0 295.2 L439.5 294.4 L440.0 294.4 L440.5 295.0 L441.0 294.6 L441.5 294.9 L442.0 296.2 L442.5 296.7 L443.0 296.6 L443.5 296.4 L444.0 295.7 L444.5 295.3 L445.0 295.5 L445.5 294.8 L446.0 295.1 L446.5 295.9 L447.0 295.6 L447.5 295.0 L448.0 295.5 L448.5 294.6 L449.0 292.6 L449.5 291.0 L450.0 288.0 L450.5 290.0 L451.0 291.3 L451.5 292.7 L452.0 292.9 L452.5 294.2 L453.0 295.2 L453.5 295.2 L454.0 295.4 L454.5 294.8 L455.0 293.6 L455.5 293.0 L456.0 292.5 L456.5 291.8 L457.0 291.0 L457.5 289.1 L458.0 291.3 L458.5 292.7 L459.0 293.9 L459.5 294.2 L460.0 294.4 L460.5 294.0 L461.0 293.4 L461.5 292.9 L462.0 293.3 L462.5 293.8 L463.0 294.6 L463.5 295.1 L464.0 295.6 L464.5 295.6 L465.0 295.9 L465.5 295.6 L466.0 295.6 L466.5 294.4 L467.0 294.6 L467.5 293.8 L468.0 293.2 L468.5 293.4 L469.0 292.8 L469.5 290.8 L470.0 292.4 L470.5 294.3 L471.0 294.3 L471.5 295.0 L472.0 295.3 L472.5 294.7 L473.0 294.2 L473.5 293.0 L474.0 292.6 L474.5 292.5 L475.0 293.4 L475.5 293.3 L476.0 294.3 L476.5 294.3 L477.0 294.1 L477.5 294.5 L478.0 295.1 L478.5 295.2 L479.0 295.5 L479.5 295.4 L480.0 294.7 L480.5 294.5 L481.0 295.1 L481.5 295.4 L482.0 296.0 L482.5 296.2 L483.0 296.6 L483.5 296.1 L484.0 295.7 L484.5 296.0 L485.0 295.6 L485.5 294.6 L486.0 293.5 L486.5 292.2 L487.0 291.8 L487.5 290.5 L488.0 289.4 L488.5 287.2 L489.0 284.0 L489.5 278.2 L490.0 282.3 L490.5 286.5 L491.0 288.6 L491.5 287.7 L492.0 285.0 L492.5 282.1 L493.0 278.0 L493.5 272.9 L494.0 265.4 L494.5 253.9 L495.0 266.5 L495.5 273.5 L496.0 278.7 L496.5 282.4 L497.0 285.8 L497.5 288.4 L498.0 288.7 L498.5 286.4 L499.0 282.9 L499.5 278.5 L500.0 270.3 L500.5 277.9 L501.0 283.1 L501.5 285.8 L502.0 287.3 L502.5 289.6 L503.0 291.4 L503.5 292.9 L504.0 293.6 L504.5 295.1 L505.0 295.5 L505.5 296.1 L506.0 294.8 L506.5 295.1 L507.0 295.2 L507.5 294.3 L508.0 294.2 L508.5 295.4 L509.0 295.3 L509.5 295.6 L510.0 296.0 L510.5 296.8 L511.0 296.3 L511.5 296.6 L512.0 296.1 L512.5 297.0 L513.0 296.7 L513.5 296.7 L514.0 296.4 L514.5 296.4 L515.0 295.5 L515.5 295.5 L516.0 296.0 L516.5 296.3 L517.0 296.1 L517.5 295.4 L518.0 295.3 L518.5 295.0 L519.0 293.7 L519.5 292.4 L520.0 290.5 L520.5 293.1 L521.0 293.9 L521.5 294.5 L522.0 294.9 L522.5 295.1 L523.0 294.9 L523.5 294.9 L524.0 294.2 L524.5 292.8 L525.0 289.2 L525.5 291.6 L526.0 293.3 L526.5 293.8 L527.0 294.2 L527.5 294.5 L528.0 294.6 L528.5 294.0 L529.0 294.5 L529.5 294.6 L530.0 294.3 L530.5 294.2 L531.0 294.3 L531.5 294.0 L532.0 293.7 L532.5 294.1 L533.0 294.5 L533.5 295.3 L534.0 294.7 L534.5 294.5 L535.0 294.3 L535.5 293.6 L536.0 293.2 L536.5 293.3 L537.0 293.9 L537.5 294.0 L538.0 293.9 L538.5 294.3 L539.0 294.9 L539.5 294.8 L540.0 295.1 L540.5 295.0 L541.0 295.0 L541.5 294.6 L542.0 294.1 L542.5 293.6 L543.0 293.4 L543.5 292.9 L544.0 292.5 L544.5 292.0 L545.0 291.9 L545.5 290.9 L546.0 291.1 L546.5 289.9 L547.0 288.8 L547.5 287.5 L548.0 284.6 L548.5 280.7 L549.0 275.5 L549.5 280.3 L550.0 283.8 L550.5 286.8 L551.0 288.4 L551.5 290.2 L552.0 292.3 L552.5 292.8 L553.0 293.8 L553.5 294.9 L554.0 294.8 L554.5 294.1 L555.0 294.6 L555.5 294.9 L556.0 294.9 L556.5 296.3 L557.0 296.0 L557.5 296.1 L558.0 296.4 L558.5 296.2 L559.0 296.3 L559.5 296.1 L560.0 296.4 L560.5 296.1 L561.0 296.4 L561.5 296.0 L562.0 296.1 L562.5 296.7 L563.0 296.1 L563.5 295.8 L564.0 295.7 L564.5 296.0 L565.0 294.9 L565.5 294.9 L566.0 294.6 L566.5 295.1 L567.0 295.0 L567.5 295.1 L568.0 295.8 L568.5 296.1 L569.0 296.1 L569.5 296.1 L570.0 296.3 L570.5 296.3 L571.0 295.6 L571.5 294.4 L572.0 293.7 L572.5 294.1 L573.0 293.8 L573.5 293.9 L574.0 295.0 L574.5 295.1 L575.0 294.7 L575.5 295.1 L576.0 295.3 L576.5 295.1 L577.0 294.8 L577.5 294.4 L578.0 294.6 L578.5 294.6 L579.0 294.8 L579.5 294.9 L580.0 295.4 L580.5 294.9 L581.0 294.8 L581.5 295.5 L582.0 295.6 L582.5 295.3 L583.0 295.5 L583.5 296.1 L584.0 295.3 L584.5 295.4 L585.0 295.3 L585.5 295.1 L586.0 294.3 L586.5 294.1 L587.0 294.1 L587.5 294.2 L588.0 294.1 L588.5 293.2 L589.0 292.0 L589.5 291.0 L590.0 288.5 L590.5 285.8 L591.0 282.6 L591.5 278.2 L592.0 271.6 L592.5 263.4 L593.0 251.3 L593.5 264.4 L594.0 273.2 L594.5 279.0 L595.0 283.0 L595.5 285.4 L596.0 287.0 L596.5 284.4 L597.0 280.4 L597.5 275.4 L598.0 267.3 L598.5 275.5 L599.0 281.0 L599.5 284.9 L600.0 288.0 L600.5 289.2 L601.0 289.9 L601.5 290.7 L602.0 291.7 L602.5 292.2 L603.0 292.4 L603.5 293.0 L604.0 293.1 L604.5 293.4 L605.0 293.3 L605.5 294.3 L606.0 294.2 L606.5 294.5 L607.0 293.4 L607.5 294.1 L608.0 293.8 L608.5 293.1 L609.0 293.8 L609.5 294.3 L610.0 294.2 L610.5 294.0 L611.0 294.2 L611.5 293.9 L612.0 293.7 L612.5 294.0 L613.0 293.9 L613.5 294.6 L614.0 294.8 L614.5 294.4 L615.0 293.9 L615.5 294.5 L616.0 293.6 L616.5 294.0 L617.0 294.9 L617.5 295.0 L618.0 294.2 L618.5 294.4 L619.0 294.5 L619.5 294.3 L620.0 294.8 L620.5 295.2 L621.0 294.9 L621.5 294.9 L622.0 294.7 L622.5 294.7 L623.0 294.0 L623.5 293.8 L624.0 293.4 L624.5 292.8 L625.0 291.9 L625.5 292.2 L626.0 291.7 L626.5 291.1 L627.0 291.2 L627.5 290.3 L628.0 288.8 L628.5 286.9 L629.0 284.3 L629.5 280.9 L630.0 276.6 L630.5 269.8 L631.0 259.8 L631.5 271.2 L632.0 277.4 L632.5 282.0 L633.0 285.3 L633.5 287.9 L634.0 288.7 L634.5 291.3 L635.0 292.1 L635.5 293.5 L636.0 293.1 L636.5 293.8 L637.0 294.5 L637.5 295.1 L638.0 294.5 L638.5 295.3 L639.0 295.4 L639.5 294.7 L640.0 294.6 L640.5 296.1 L641.0 295.8 L641.5 295.6 L642.0 295.8 L642.5 295.8 L643.0 294.8 L643.5 293.9 L644.0 293.5 L644.5 293.5 L645.0 293.3 L645.5 292.2 L646.0 292.9 L646.5 293.3 L647.0 292.7 L647.5 292.5 L648.0 293.0 L648.5 292.7 L649.0 291.4 L649.5 290.7 L650.0 289.7 L650.5 287.5 L651.0 285.2 L651.5 281.5 L652.0 277.4 L652.5 282.4 L653.0 285.8 L653.5 287.9 L654.0 289.9 L654.5 290.2 L655.0 290.7 L655.5 291.0 L656.0 291.6 L656.5 292.4 L657.0 293.3 L657.5 292.7 L658.0 292.7 L658.5 292.4 L659.0 292.6 L659.5 292.5 L660.0 292.9 L660.5 292.2 L661.0 290.3 L661.5 287.6 L662.0 285.4 L662.5 282.8 L663.0 278.8 L663.5 284.1 L664.0 287.7 L664.5 288.8 L665.0 289.8 L665.5 290.8 L666.0 291.7 L666.5 292.6 L667.0 294.4 L667.5 293.7 L668.0 293.7 L668.5 294.4 L669.0 294.3 L669.5 294.2 L670.0 294.8 L670.5 294.8 L671.0 293.9 L671.5 294.2 L672.0 295.1 L672.5 295.9 L673.0 296.7 L673.5 296.4 L674.0 295.2 L674.5 293.9 L675.0 291.9 L675.5 291.0 L676.0 289.8 L676.5 288.6 L677.0 284.8 L677.5 289.1 L678.0 291.4 L678.5 293.3 L679.0 294.2 L679.5 295.1 L680.0 294.9 L680.5 294.6 L681.0 294.0 L681.5 293.7 L682.0 293.6 L682.5 294.4 L683.0 294.5 L683.5 294.9 L684.0 294.6 L684.5 294.8 L685.0 294.4 L685.5 294.6 L686.0 294.4 L686.5 293.7 L687.0 293.3 L687.5 292.4 L688.0 291.7 L688.5 291.8 L689.0 292.5 L689.5 292.0 L690.0 292.2 L690.5 291.5 L691.0 290.1 L691.5 288.4 L692.0 288.1 L692.5 286.2 L693.0 284.3 L693.5 282.3 L694.0 278.7 L694.5 272.9 L695.0 266.6 L695.5 257.1 L696.0 242.0 L696.5 257.7 L697.0 266.6 L697.5 273.0 L698.0 277.6 L698.5 281.1 L699.0 280.5 L699.5 277.8 L700.0 272.6 L700.5 264.0 L701.0 251.2 L701.5 263.6 L702.0 271.8 L702.5 276.9 L703.0 281.3 L703.5 284.2 L704.0 286.6 L704.5 287.9 L705.0 288.9 L705.5 290.6 L706.0 291.6 L706.5 292.5 L707.0 292.5 L707.5 293.3 L708.0 293.3 L708.5 293.3 L709.0 293.5 L709.5 294.3 L710.0 294.5 L710.5 294.3 L711.0 294.4 L711.5 294.9 L712.0 294.5 L712.5 294.5 L713.0 294.7 L713.5 295.0 L714.0 294.7 L714.5 294.3 L715.0 293.1 L715.5 292.4 L716.0 291.5 L716.5 288.9 L717.0 284.3 L717.5 289.7 L718.0 292.3 L718.5 293.2 L719.0 294.2 L719.5 294.9 L720.0 294.7 L720.5 293.6 L721.0 292.1 L721.5 290.6 L722.0 288.0 L722.5 282.9 L723.0 287.6 L723.5 291.2 L724.0 293.1 L724.5 293.2 L725.0 293.1 L725.5 292.8 L726.0 292.2 L726.5 290.6 L727.0 289.0 L727.5 286.6 L728.0 280.7 L728.5 284.8 L729.0 287.9 L729.5 290.7 L730.0 291.6 L730.5 292.3 L731.0 292.9 L731.5 293.4 L732.0 293.1 L732.5 292.7 L733.0 293.5 L733.5 294.6 L734.0 294.6 L734.5 293.8 L735.0 293.7 L735.5 293.6 L736.0 292.7 L736.5 293.0 L737.0 294.5 L737.5 294.7 L738.0 294.3 L738.5 293.7 L739.0 293.7 L739.5 292.7 L740.0 290.8 L740.5 288.1 L741.0 285.6 L741.5 287.2 L742.0 289.3 L742.5 291.0 L743.0 292.8 L743.5 293.7 L744.0 293.5 L744.5 293.7 L745.0 293.3 L745.5 293.2 L746.0 292.2 L746.5 292.4 L747.0 292.2 L747.5 291.6 L748.0 291.2 L748.5 291.5 L749.0 292.1 L749.5 292.0 L750.0 292.7 L750.5 292.3 L751.0 292.1 L751.5 291.5 L752.0 289.8 L752.5 289.2 L753.0 288.3 L753.5 287.7 L754.0 286.4 L754.5 285.8 L755.0 283.6 L755.5 279.4 L756.0 274.2 L756.5 266.5 L757.0 254.3 L757.5 265.5 L758.0 272.9 L758.5 277.9 L759.0 281.9 L759.5 284.9 L760.0 287.7 L760.5 290.0 L761.0 291.7 L761.5 292.7 L762.0 293.7 L762.5 294.0 L763.0 294.2 L763.5 294.5 L764.0 294.5 L764.5 294.8 L765.0 295.5 L765.5 295.7 L766.0 296.4 L766.5 297.4 L767.0 297.8 L767.5 297.9 L768.0 298.9 L768.5 297.6 L769.0 295.7 L769.5 294.6 L770.0 296.2 L770.5 296.2 L771.0 297.7 L771.5 298.8 L772.0 298.6 L772.5 298.5 L773.0 299.2 L773.5 297.9 L774.0 297.7 L774.5 296.9 L775.0 296.5 L775.5 296.4 L776.0 296.4 L776.5 296.2 L777.0 296.2 L777.5 296.2 L778.0 295.1 L778.5 294.6 L779.0 293.3 L779.5 292.5 L780.0 292.0 L780.5 291.4 L781.0 290.2 L781.5 288.9 L782.0 288.2 L782.5 285.9 L783.0 284.2 L783.5 281.5 L784.0 277.3 L784.5 271.5 L785.0 263.0 L785.5 252.5 L786.0 236.4 L786.5 253.6 L787.0 264.9 L787.5 272.8 L788.0 277.6 L788.5 280.5 L789.0 283.2 L789.5 285.5 L790.0 287.2 L790.5 288.0 L791.0 287.3 L791.5 284.7 L792.0 282.1 L792.5 279.6 L793.0 275.9 L793.5 269.9 L794.0 260.4 L794.5 246.0 L795.0 223.1 L795.5 187.3 L796.0 127.1 L796.5 187.6 L797.0 223.8 L797.5 246.5 L798.0 258.7 L798.5 244.9 L799.0 259.1 L799.5 267.7 L800.0 272.7 L800.5 278.5 L801.0 282.0 L801.5 279.3 L802.0 275.8 L802.5 269.8 L803.0 260.9 L803.5 248.0 L804.0 260.7 L804.5 269.2 L805.0 275.7 L805.5 280.1 L806.0 282.2 L806.5 285.8 L807.0 287.2 L807.5 288.1 L808.0 289.1 L808.5 290.4 L809.0 289.9 L809.5 290.3 L810.0 291.3 L810.5 292.2 L811.0 292.8 L811.5 293.6 L812.0 294.0 L812.5 294.6 L813.0 294.7 L813.5 295.9 L814.0 295.7 L814.5 296.1 L815.0 295.7 L815.5 295.1 L816.0 294.5 L816.5 294.9 L817.0 295.2 L817.5 294.9 L818.0 295.2 L818.5 295.5 L819.0 295.7 L819.5 295.6 L820.0 295.3 L820.5 295.2 L821.0 294.6 L821.5 293.9 L822.0 293.5 L822.5 293.7 L823.0 293.3 L823.5 292.7 L824.0 292.2 L824.5 292.1 L825.0 292.1 L825.5 291.6 L826.0 292.1 L826.5 292.3 L827.0 292.7 L827.5 292.1 L828.0 292.3 L828.5 291.4 L829.0 290.9 L829.5 289.9 L830.0 289.4 L830.5 289.2 L831.0 289.3 L831.5 288.1 L832.0 287.1 L832.5 285.0 L833.0 282.8 L833.5 279.9 L834.0 277.5 L834.5 272.5 L835.0 266.8 L835.5 256.2 L836.0 240.4 L836.5 255.7 L837.0 266.8 L837.5 273.6 L838.0 279.7 L838.5 282.8 L839.0 285.6 L839.5 287.6 L840.0 289.8 L840.5 291.1 L841.0 292.8 L841.5 293.9 L842.0 293.9 L842.5 293.5 L843.0 293.9 L843.5 294.1 L844.0 294.6 L844.5 295.2 L845.0 296.2 L845.5 296.1 L846.0 295.7 L846.5 295.0 L847.0 293.3 L847.5 290.0 L848.0 286.1 L848.5 289.5 L849.0 291.4 L849.5 292.5 L850.0 293.9 L850.5 294.7 L851.0 296.3 L851.5 296.8 L852.0 296.7 L852.5 296.1 L853.0 295.3 L853.5 294.4 L854.0 294.4 L854.5 294.4 L855.0 294.5 L855.5 294.5 L856.0 294.0 L856.5 293.2 L857.0 293.8 L857.5 293.7 L858.0 294.2 L858.5 294.9 L859.0 294.8 L859.5 293.8 L860.0 293.1 L860.5 293.3 L861.0 293.3 L861.5 293.9 L862.0 294.2 L862.5 293.8 L863.0 293.4 L863.5 292.7 L864.0 292.7 L864.5 292.7 L865.0 292.8 L865.5 292.7 L866.0 292.9 L866.5 293.4 L867.0 293.0 L867.5 293.1 L868.0 293.7 L868.5 293.8 L869.0 293.2 L869.5 293.1 L870.0 293.5 L870.5 293.0 L871.0 292.4 L871.5 292.2 L872.0 292.3 L872.5 291.0 L873.0 289.9 L873.5 288.7 L874.0 287.0 L874.5 284.2 L875.0 281.0 L875.5 275.5 L876.0 281.5 L876.5 285.1 L877.0 286.3 L877.5 287.7 L878.0 289.0 L878.5 290.2 L879.0 291.0 L879.5 292.5 L880.0 293.5 L880.5 293.6 L881.0 294.1 L881.5 294.4 L882.0 294.9 L882.5 294.8 L883.0 294.5 L883.5 293.6 L884.0 293.8 L884.5 293.4 L885.0 293.7 L885.5 294.6 L886.0 294.8 L886.5 294.5 L887.0 293.9 L887.5 294.0 L888.0 293.6 L888.5 293.2 L889.0 294.0 L889.5 293.3 L890.0 293.0 L890.5 292.6 L891.0 292.0 L891.5 291.1 L892.0 290.9 L892.5 289.6 L893.0 289.2 L893.5 288.3 L894.0 287.3 L894.5 285.3 L895.0 283.8 L895.5 280.7 L896.0 276.4 L896.5 270.5 L897.0 261.5 L897.5 270.6 L898.0 277.2 L898.5 281.5 L899.0 284.5 L899.5 287.2 L900.0 285.6 L900.5 283.2 L901.0 279.9 L901.5 274.8 L902.0 268.2 L902.5 256.8 L903.0 267.7 L903.5 274.8 L904.0 280.3 L904.5 283.0 L905.0 285.7 L905.5 287.8 L906.0 286.0 L906.5 283.7 L907.0 280.1 L907.5 275.1 L908.0 266.8 L908.5 274.7 L909.0 279.0 L909.5 282.2 L910.0 285.3 L910.5 286.3 L911.0 288.4 L911.5 290.1 L912.0 291.4 L912.5 291.8 L913.0 292.7 L913.5 292.2 L914.0 290.6 L914.5 287.5 L915.0 283.1 L915.5 287.5 L916.0 290.4 L916.5 292.0 L917.0 293.2 L917.5 294.1 L918.0 295.1 L918.5 295.5 L919.0 295.5 L919.5 295.2 L920.0 295.3 L920.5 294.8 L921.0 294.5 L921.5 294.6 L922.0 294.8 L922.5 295.2 L923.0 295.8 L923.5 294.9 L924.0 295.4 L924.5 295.8 L925.0 295.0 L925.5 294.9 L926.0 295.8 L926.5 296.1 L927.0 295.8 L927.5 296.3 L928.0 296.7 L928.5 296.7 L929.0 296.7 L929.5 296.2 L930.0 296.7 L930.5 297.1 L931.0 296.3 L931.5 296.5 L932.0 297.1 L932.5 296.6 L933.0 296.2 L933.5 296.3 L934.0 295.9 L934.5 295.3 L935.0 295.1 L935.5 294.3 L936.0 294.5 L936.5 294.5 L937.0 294.5 L937.5 294.0 L938.0 294.1 L938.5 292.8 L939.0 291.8 L939.5 290.2 L940.0 288.4 L940.5 285.0 L941.0 279.6 L941.5 284.8 L942.0 288.5 L942.5 290.7 L943.0 292.2 L943.5 293.2 L944.0 294.3 L944.5 294.4 L945.0 294.0 L945.5 293.6 L946.0 293.3 L946.5 293.0 L947.0 294.0 L947.5 294.7 L948.0 295.1 L948.5 294.9 L949.0 294.4 L949.5 293.9 L950.0 293.2 L950.5 292.8 L951.0 291.8 L951.5 289.6 L952.0 286.2 L952.5 289.2 L953.0 291.4 L953.5 293.3 L954.0 294.9 L954.5 295.3 L955.0 295.3 L955.5 294.8 L956.0 294.7 L956.5 294.7 L957.0 295.4 L957.5 295.9 L958.0 295.9 L958.5 295.0 L959.0 294.3 L959.5 294.3 L960.0 294.5 L960.5 294.4 L961.0 295.0 L961.5 294.6 L962.0 294.4 L962.5 293.9 L963.0 293.9 L963.5 294.3 L964.0 294.5 L964.5 293.8 L965.0 293.4 L965.5 292.8 L966.0 291.2 L966.5 288.7 L967.0 285.5 L967.5 289.1 L968.0 291.7 L968.5 293.7 L969.0 294.7 L969.5 295.4 L970.0 296.5 L970.5 296.3 L971.0 296.5 L971.5 296.0 L972.0 296.1 L972.5 294.5 L973.0 293.9 L973.5 292.9 L974.0 291.3 L974.5 288.6 L975.0 291.4 L975.5 292.8 L976.0 294.2 L976.5 294.0 L977.0 294.3 L977.5 295.0 L978.0 294.9 L978.5 294.7 L979.0 295.0 L979.5 295.0 L980.0 294.9 L980.5 294.4 L981.0 294.8 L981.5 294.3 L982.0 294.2 L982.5 294.2 L983.0 294.1 L983.5 294.0 L984.0 293.6 L984.5 293.3 L985.0 293.2 L985.5 292.9 L986.0 292.9 L986.5 293.7 L987.0 293.9 L987.5 293.3 L988.0 293.1 L988.5 293.4 L989.0 293.2 L989.5 293.0 L990.0 293.6 L990.5 294.0 L991.0 293.7 L991.5 294.0 L992.0 294.3 L992.5 294.5 L993.0 294.5 L993.5 293.8 L994.0 293.0 L994.5 293.1 L995.0 292.8 L995.5 292.4 L996.0 292.5 L996.5 292.5 L997.0 290.6 L997.5 289.5 L998.0 287.6 L998.5 284.9 L999.0 280.7 L999.5 276.9 L1000.0 269.7 L1000.5 260.7 L1001.0 247.4 L1001.5 261.7 L1002.0 270.6 L1002.5 276.9 L1003.0 281.3 L1003.5 283.2 L1004.0 279.4 L1004.5 275.0 L1005.0 267.3 L1005.5 258.0 L1006.0 241.9 L1006.5 256.6 L1007.0 266.0 L1007.5 273.8 L1008.0 278.3 L1008.5 281.7 L1009.0 284.5 L1009.5 286.4 L1010.0 287.7 L1010.5 286.4 L1011.0 282.1 L1011.5 287.8 L1012.0 290.9 L1012.5 292.5 L1013.0 292.8 L1013.5 293.7 L1014.0 293.7 L1014.5 293.6 L1015.0 294.6 L1015.5 295.4 L1016.0 294.7 L1016.5 294.7 L1017.0 295.6 L1017.5 295.8 L1018.0 295.5 L1018.5 296.1 L1019.0 296.1 L1019.5 295.6 L1020.0 295.0 L1020.5 295.1 L1021.0 295.2 L1021.5 295.3 L1022.0 295.2 L1022.5 295.5 L1023.0 295.6 L1023.5 295.3 L1024.0 295.9 L1024.5 296.2 L1025.0 296.1 L1025.5 295.2 L1026.0 295.3 L1026.5 295.0 L1027.0 294.6 L1027.5 294.8 L1028.0 294.8 L1028.5 294.9 L1029.0 295.0 L1029.5 295.1 L1030.0 296.4 L1030.5 296.1 L1031.0 295.5 L1031.5 295.3 L1032.0 296.0 L1032.5 294.6 L1033.0 294.6 L1033.5 295.2 L1034.0 295.6 L1034.5 295.0 L1035.0 295.3 L1035.5 295.9 L1036.0 295.8 L1036.5 295.4 L1037.0 294.8 L1037.5 295.3 L1038.0 295.4 L1038.5 294.6 L1039.0 295.5 L1039.5 296.5 L1040.0 295.9 L1040.5 295.2 L1041.0 295.2 L1041.5 295.3 L1042.0 295.4 L1042.5 295.1 L1043.0 295.0 L1043.5 294.6 L1044.0 293.8 L1044.5 292.6 L1045.0 292.1 L1045.5 290.4 L1046.0 287.9 L1046.5 291.3 L1047.0 293.1 L1047.5 294.8 L1048.0 296.0 L1048.5 295.6 L1049.0 295.6 L1049.5 296.4 L1050.0 296.0 L1050.5 295.7 L1051.0 295.9 L1051.5 296.0 L1052.0 295.6 L1052.5 295.7 L1053.0 295.1 L1053.5 294.9 L1054.0 293.7 L1054.5 291.6 L1055.0 288.4 L1055.5 291.6 L1056.0 293.5 L1056.5 294.9 L1057.0 296.0 L1057.5 296.0 L1058.0 296.4 L1058.5 296.0 L1059.0 295.5 L1059.5 295.4 L1060.0 295.4 L1060.5 295.1 L1061.0 295.3 L1061.5 295.8 L1062.0 296.0 L1062.5 296.7 L1063.0 296.8 L1063.5 296.6 L1064.0 296.5 L1064.5 296.0 L1065.0 295.2 L1065.5 294.5 L1066.0 294.3 L1066.5 294.2 L1067.0 294.7 L1067.5 294.2 L1068.0 295.3 L1068.5 296.1 L1069.0 296.0 L1069.5 294.9 L1070.0 295.1 L1070.5 293.8 L1071.0 292.6 L1071.5 292.0 L1072.0 293.3 L1072.5 292.7 L1073.0 293.3 L1073.5 293.7 L1074.0 294.6 L1074.5 294.2 L1075.0 294.9 L1075.5 294.6 L1076.0 294.6 L1076.5 294.4 L1077.0 294.2 L1077.5 293.9 L1078.0 294.3 L1078.5 294.3 L1079.0 294.6 L1079.5 295.5 L1080.0 296.2 L1080.5 296.4 L1081.0 297.1 L1081.5 297.3 L1082.0 297.1 L1082.5 297.4 L1083.0 297.6 L1083.5 297.0 L1084.0 296.3 L1084.5 296.4 L1085.0 296.3 L1085.5 296.3 L1086.0 296.5 L1086.5 297.4 L1087.0 298.4 L1087.5 297.9 L1088.0 297.7 L1088.5 297.8 L1089.0 297.5 L1089.5 297.5 L1090.0 297.9 L1090.5 297.7 L1091.0 297.4 L1091.5 297.0 L1092.0 296.8 L1092.5 296.8 L1093.0 297.5 L1093.5 296.9 L1094.0 296.2 L1094.5 296.5 L1095.0 296.2 L1095.5 296.1 L1096.0 296.7 L1096.5 295.8 L1097.0 294.3 L1097.5 292.7 L1098.0 290.0 L1098.5 286.0 L1099.0 280.9 L1099.5 287.1 L1100.0 289.1 L1100.5 287.9 L1101.0 286.1 L1101.5 283.7 L1102.0 280.0 L1102.5 276.2 L1103.0 269.5 L1103.5 261.5 L1104.0 247.3 L1104.5 259.7 L1105.0 268.8 L1105.5 275.4 L1106.0 279.8 L1106.5 282.1 L1107.0 279.3 L1107.5 274.0 L1108.0 267.1 L1108.5 257.9 L1109.0 242.9 L1109.5 257.7 L1110.0 267.2 L1110.5 273.7 L1111.0 278.1 L1111.5 282.2 L1112.0 285.1 L1112.5 287.1 L1113.0 289.6 L1113.5 291.3 L1114.0 291.5 L1114.5 291.3 L1115.0 291.2 L1115.5 291.4 L1116.0 291.2 L1116.5 292.3 L1117.0 292.5 L1117.5 292.7 L1118.0 293.4 L1118.5 293.6 L1119.0 294.1 L1119.5 294.9 L1120.0 294.1 L1120.5 293.1 L1121.0 293.6 L1121.5 292.8 L1122.0 291.9 L1122.5 293.1 L1123.0 293.6 L1123.5 293.5 L1124.0 294.1 L1124.5 294.5 L1125.0 293.6 L1125.5 293.1 L1126.0 293.0 L1126.5 291.5 L1127.0 289.5 L1127.5 291.8 L1128.0 293.2 L1128.5 294.2 L1129.0 294.9 L1129.5 295.1 L1130.0 295.0 L1130.5 295.1 L1131.0 294.9 L1131.5 294.9 L1132.0 295.1 L1132.5 294.9 L1133.0 294.9 L1133.5 295.3 L1134.0 295.4 L1134.5 295.3 L1135.0 295.5 L1135.5 295.4 L1136.0 295.0 L1136.5 294.4 L1137.0 294.7 L1137.5 294.0 L1138.0 294.6 L1138.5 294.9 L1139.0 296.0 L1139.5 295.7 L1140.0 296.2 L1140.5 295.6 L1141.0 295.9 L1141.5 294.8 L1142.0 295.1 L1142.5 294.0 L1143.0 294.8 L1143.5 294.0 L1144.0 294.8 L1144.5 294.9 L1145.0 295.5 L1145.5 295.4 L1146.0 296.2 L1146.5 296.3 L1147.0 296.1 L1147.5 296.1 L1148.0 296.3 L1148.5 296.0 L1149.0 296.3 L1149.5 296.2 L1150.0 296.6 L1150.5 295.9 L1151.0 296.2 L1151.5 295.3 L1152.0 295.9 L1152.5 295.5 L1153.0 295.7 L1153.5 295.6 L1154.0 295.5 L1154.5 295.2 L1155.0 294.2 L1155.5 294.7 L1156.0 294.1 L1156.5 292.8 L1157.0 290.7 L1157.5 287.3 L1158.0 281.6 L1158.5 286.1 L1159.0 289.5 L1159.5 291.6 L1160.0 292.8 L1160.5 294.0 L1161.0 293.9 L1161.5 294.4 L1162.0 294.3 L1162.5 294.3 L1163.0 294.7 L1163.5 295.9 L1164.0 295.4 L1164.5 295.6 L1165.0 296.0 L1165.5 296.3 L1166.0 295.5 L1166.5 295.1 L1167.0 294.9 L1167.5 294.4 L1168.0 293.9 L1168.5 295.1 L1169.0 295.1 L1169.5 296.9 L1170.0 296.3 L1170.5 296.4 L1171.0 296.5 L1171.5 295.9 L1172.0 294.6 L1172.5 293.6 L1173.0 293.7 L1173.5 293.1 L1174.0 292.9 L1174.5 293.1 L1175.0 293.8 L1175.5 294.1 L1176.0 293.9 L1176.5 293.9 L1177.0 294.2 L1177.5 294.4 L1178.0 294.0 L1178.5 293.8 L1179.0 294.2 L1179.5 294.0 L1180.0 293.5 L1180.5 293.2 L1181.0 293.4 L1181.5 293.1 L1182.0 291.9 L1182.5 292.5 L1183.0 292.7 L1183.5 293.3 L1184.0 293.7 L1184.5 294.6 L1185.0 294.1 L1185.5 293.8 L1186.0 293.8 L1186.5 292.8 L1187.0 292.8 L1187.5 292.9 L1188.0 292.9 L1188.5 292.8 L1189.0 293.5 L1189.5 294.1 L1190.0 294.2 L1190.5 294.8 L1191.0 295.0 L1191.5 294.6 L1192.0 294.2 L1192.5 293.9 L1193.0 293.8 L1193.5 293.9 L1194.0 293.8 L1194.5 293.5 L1195.0 293.8 L1195.5 293.7 L1196.0 292.9 L1196.5 292.6 L1197.0 292.4 L1197.5 291.5 L1198.0 290.2 L1198.5 290.0 L1199.0 288.8 L1199.5 287.0 L1200.0 284.6 L1200.5 281.7 L1201.0 277.1 L1201.5 271.5 L1202.0 261.8 L1202.5 270.8 L1203.0 277.1 L1203.5 281.0 L1204.0 283.8 L1204.5 285.7 L1205.0 285.7 L1205.5 283.8 L1206.0 280.4 L1206.5 275.2 L1207.0 267.8 L1207.5 275.0 L1208.0 279.0 L1208.5 282.5 L1209.0 285.6 L1209.5 284.6 L1210.0 282.5 L1210.5 280.4 L1211.0 276.0 L1211.5 269.0 L1212.0 259.1 L1212.5 269.2 L1213.0 276.0 L1213.5 280.8 L1214.0 284.0 L1214.5 286.2 L1215.0 288.4 L1215.5 289.3 L1216.0 291.0 L1216.5 291.9 L1217.0 293.0 L1217.5 293.0 L1218.0 291.8 L1218.5 288.9 L1219.0 284.1 L1219.5 287.8 L1220.0 290.6 L1220.5 292.5 L1221.0 293.8 L1221.5 294.7 L1222.0 295.5 L1222.5 294.9 L1223.0 294.8 L1223.5 294.5 L1224.0 294.7 L1224.5 294.6 L1225.0 294.1 L1225.5 293.1 L1226.0 292.8 L1226.5 292.3 L1227.0 291.6 L1227.5 291.1 L1228.0 289.4 L1228.5 285.9 L1229.0 281.4 L1229.5 285.2 L1230.0 288.0 L1230.5 290.1 L1231.0 292.2 L1231.5 292.4 L1232.0 293.6 L1232.5 293.3 L1233.0 291.0 L1233.5 288.3 L1234.0 284.1 L1234.5 287.7 L1235.0 290.2 L1235.5 292.3 L1236.0 292.7 L1236.5 293.4 L1237.0 294.1 L1237.5 293.9 L1238.0 293.3 L1238.5 293.0 L1239.0 292.6 L1239.5 292.7 L1240.0 293.5 L1240.5 293.6 L1241.0 294.0 L1241.5 294.7 L1242.0 294.0 L1242.5 293.7 L1243.0 294.1 L1243.5 294.5 L1244.0 294.6 L1244.5 295.5 L1245.0 295.6 L1245.5 296.3 L1246.0 296.1 L1246.5 296.1 L1247.0 296.2 L1247.5 296.2 L1248.0 296.0 L1248.5 296.7 L1249.0 297.1 L1249.5 298.1 L1250.0 297.5 L1250.5 297.6 L1251.0 297.4 L1251.5 297.6 L1252.0 296.7 L1252.5 296.8 L1253.0 297.1 L1253.5 296.7 L1254.0 296.3 L1254.5 296.4 L1255.0 295.9 L1255.5 295.5 L1256.0 295.3 L1256.5 295.0 L1257.0 295.0 L1257.5 294.8 L1258.0 293.9 L1258.5 293.8 L1259.0 293.9 L1259.5 291.7 L1260.0 290.1 L1260.5 287.6 L1261.0 282.3 L1261.5 286.9 L1262.0 291.7 L1262.5 293.0 L1263.0 293.3 L1263.5 293.5 L1264.0 294.3 L1264.5 294.0 L1265.0 294.5 L1265.5 294.8 L1266.0 295.5 L1266.5 296.2 L1267.0 296.9 L1267.5 296.5 L1268.0 297.6 L1268.5 296.4 L1269.0 295.0 L1269.5 294.3 L1270.0 294.3 L1270.5 293.3 L1271.0 293.3 L1271.5 293.6 L1272.0 294.0 L1272.5 293.9 L1273.0 294.6 L1273.5 294.5 L1274.0 295.2 L1274.5 294.9 L1275.0 294.3 L1275.5 293.8 L1276.0 293.9 L1276.5 293.2 L1277.0 293.2 L1277.5 293.2 L1278.0 293.1 L1278.5 292.7 L1279.0 292.0 L1279.5 291.0 L1280.0 290.3 L1280.5 289.0 L1281.0 286.4 L1281.5 283.4 L1282.0 280.7 L1282.5 274.4 L1283.0 266.4 L1283.5 275.0 L1284.0 281.5 L1284.5 285.0 L1285.0 287.7 L1285.5 289.4 L1286.0 291.0 L1286.5 291.3 L1287.0 291.6 L1287.5 292.8 L1288.0 293.5 L1288.5 293.1 L1289.0 292.8 L1289.5 293.0 L1290.0 293.6 L1290.5 293.6 L1291.0 294.7 L1291.5 295.1 L1292.0 294.6 L1292.5 294.3 L1293.0 293.9 L1293.5 294.1 L1294.0 293.9 L1294.5 294.5 L1295.0 294.2 L1295.5 293.4 L1296.0 293.2 L1296.5 293.1 L1297.0 292.9 L1297.5 293.4 L1298.0 293.0 L1298.5 292.8 L1299.0 292.3 L1299.5 292.0 L1300.0 290.3 L1300.5 290.3 L1301.0 288.9 L1301.5 286.6 L1302.0 284.5 L1302.5 282.6 L1303.0 279.0 L1303.5 274.4 L1304.0 269.0 L1304.5 260.1 L1305.0 245.9 L1305.5 259.9 L1306.0 268.6 L1306.5 274.7 L1307.0 279.2 L1307.5 281.0 L1308.0 277.3 L1308.5 272.0 L1309.0 263.8 L1309.5 251.4 L1310.0 264.0 L1310.5 272.2 L1311.0 278.3 L1311.5 282.5 L1312.0 285.5 L1312.5 288.2 L1313.0 285.7 L1313.5 282.3 L1314.0 276.4 L1314.5 282.6 L1315.0 285.3 L1315.5 286.8 L1316.0 288.3 L1316.5 289.0 L1317.0 289.9 L1317.5 291.2 L1318.0 292.3 L1318.5 292.2 L1319.0 292.5 L1319.5 292.8 L1320.0 293.5 L1320.5 293.4 L1321.0 293.7 L1321.5 293.1 L1322.0 292.1 L1322.5 291.3 L1323.0 291.1 L1323.5 291.8 L1324.0 292.6 L1324.5 293.0 L1325.0 293.9 L1325.5 293.9 L1326.0 294.0 L1325.5 337.0" fill="none" stroke="#d6d6d6" stroke-width="1" stroke-linejoin="round"/></g></svg>
<svg style="left:0;top:0" width="600" height="340" viewBox="0 0 600 340"><path d="M507.3 51V337" stroke="#000" stroke-width="3"/><path d="M507.3 51V337" stroke="#fff" stroke-width="1.300" stroke-dasharray="4 4" stroke-dashoffset="-4"/></svg>
<svg style="left:0;top:0" width="600" height="340" viewBox="0 0 600 340"><path d="M516.4 51V337" stroke="#000" stroke-width="3"/><path d="M516.4 51V337" stroke="#fff" stroke-width="1.300" stroke-dasharray="4 4" stroke-dashoffset="-4"/></svg>
<div class="r" style="left:792px;top:52px;width:10px;height:285px;background:linear-gradient(rgba(33,150,33,0.93) 0,rgba(31,142,31,0.93) 24%,rgba(26,118,26,0.92) 24.500%,rgba(27,116,27,0.9) 43%,rgba(31,124,31,0.86) 44%,rgba(32,118,34,0.76) 58%,rgba(38,108,42,0.42) 68%,rgba(48,100,54,0.22) 84%,rgba(40,48,40,0.55) 86%,rgba(40,48,40,0.55) 87.500%,rgba(50,100,56,0.2) 88%,rgba(36,40,36,0.7) 92%,rgba(36,40,36,0.7) 96.500%,rgba(50,100,56,0.3) 97%);border-left:1px solid #3fb53f;border-right:1px solid #3fb53f"></div>
<svg style="left:0;top:0" width="1366" height="340" viewBox="0 0 1366 340"><defs><clipPath id="mc"><rect x="793" y="60" width="8" height="270"/></clipPath></defs><g clip-path="url(#mc)"><path d="M790.0 287.2 L790.5 288.0 L791.0 287.3 L791.5 284.7 L792.0 282.1 L792.5 279.6 L793.0 275.9 L793.5 269.9 L794.0 260.4 L794.5 246.0 L795.0 223.1 L795.5 187.3 L796.0 127.1 L796.5 187.6 L797.0 223.8 L797.5 246.5 L798.0 258.7 L798.5 244.9 L799.0 259.1 L799.5 267.7 L800.0 272.7 L800.5 278.5 L801.0 282.0 L801.5 279.3 L802.0 275.8 L802.5 269.8 L803.0 260.9 L803.5 248.0 L804.0 260.7 L804.0 330 L790.0 330 Z" fill="rgba(200,230,200,0.28)"/><path d="M790.0 287.2 L790.5 288.0 L791.0 287.3 L791.5 284.7 L792.0 282.1 L792.5 279.6 L793.0 275.9 L793.5 269.9 L794.0 260.4 L794.5 246.0 L795.0 223.1 L795.5 187.3 L796.0 127.1 L796.5 187.6 L797.0 223.8 L797.5 246.5 L798.0 258.7 L798.5 244.9 L799.0 259.1 L799.5 267.7 L800.0 272.7 L800.5 278.5 L801.0 282.0 L801.5 279.3 L802.0 275.8 L802.5 269.8 L803.0 260.9 L803.5 248.0 L804.0 260.7" fill="none" stroke="rgba(235,250,235,0.8)" stroke-width="1.1"/></g></svg>
<div class="r" style="left:792px;top:52.5px;width:10px;height:5.5px;background:#3acb3a;"></div>
<div class="r" style="left:792px;top:330px;width:10px;height:7px;background:#4fce5c;"></div>
<div class="r" style="left:793px;top:88px;width:8px;height:1px;background:#4fc44f;"></div>
<div class="r" style="left:789px;top:62px;width:16px;height:17px;background:#0f4a14;border-radius:4px"></div>
<span class="t" style='left:794.08px;top:65.00px;font:10.5px/10.5px "Liberation Sans",sans-serif;color:#f4fff4;'>1</span>
<div class="r" style="left:1020px;top:57px;width:300px;height:24px;background:#4b0202;border:1px solid #5e2222"></div>
<span class="t" style='left:1031.10px;top:61.00px;font:14px/14px "Liberation Sans",sans-serif;color:#d2cccc;transform:scaleX(0.8225);transform-origin:0 0;'>Scale...</span>
<div class="r" style="left:1080px;top:58px;width:1px;height:22px;background:#632a2a;"></div>
<span class="t" style='left:1099.40px;top:61.00px;font:14px/14px "Liberation Sans",sans-serif;color:#d2cccc;transform:scaleX(0.8488);transform-origin:0 0;'>Low</span>
<div class="r" style="left:1140px;top:58px;width:1px;height:22px;background:#632a2a;"></div>
<span class="t" style='left:1156.80px;top:61.00px;font:14px/14px "Liberation Sans",sans-serif;color:#d2cccc;transform:scaleX(0.9377);transform-origin:0 0;'>High</span>
<div class="r" style="left:1200px;top:58px;width:1px;height:22px;background:#632a2a;"></div>
<div class="r" style="left:1260px;top:58px;width:1px;height:22px;background:#632a2a;"></div>
<span class="t" style='left:1273.30px;top:61.00px;font:14px/14px "Liberation Sans",sans-serif;color:#d2cccc;transform:scaleX(0.9501);transform-origin:0 0;'>Zoom</span>
<svg style="left:1214px;top:62px" width="32" height="16" viewBox="0 0 32 16"><rect x="15" y="1.100" width="2" height="13" fill="#c9c2c2"/><path d="M2 4v5h2.200v-1h4v-1h3.800v-1h-3.800v-1h-4v-1z" fill="#e0dcdc"/><path d="M30 4v5h-2.200v-1h-4v-1h-3.800v-1h3.800v-1h4v-1z" fill="#e0dcdc"/></svg>
<div class="r" style="left:268px;top:337px;width:1058px;height:11px;background:linear-gradient(#787878,#5a5a5a 20%,#3a3a3a 100%);"></div>
<div class="r" style="left:268px;top:348px;width:1058px;height:10px;background:#000;"></div>
<svg style="left:0;top:0" width="1366" height="360" viewBox="0 0 1366 360"><rect x="273.9" y="338" width="1.800" height="3" fill="#a8a8a8"/><rect x="290.0" y="338" width="1.800" height="2" fill="#a8a8a8"/><rect x="306.1" y="338" width="1.800" height="4.5" fill="#a8a8a8"/><rect x="322.2" y="338" width="1.800" height="2" fill="#a8a8a8"/><rect x="338.3" y="338" width="1.800" height="3" fill="#a8a8a8"/><rect x="354.4" y="338" width="1.800" height="2" fill="#a8a8a8"/><rect x="370.5" y="338" width="1.800" height="3" fill="#a8a8a8"/><rect x="386.6" y="338" width="1.800" height="2" fill="#a8a8a8"/><rect x="402.7" y="338" width="1.800" height="3" fill="#a8a8a8"/><rect x="418.8" y="338" width="1.800" height="2" fill="#a8a8a8"/><rect x="434.9" y="338" width="1.800" height="3" fill="#a8a8a8"/><rect x="451.0" y="338" width="1.800" height="2" fill="#a8a8a8"/><rect x="467.1" y="338" width="1.800" height="4.5" fill="#a8a8a8"/><rect x="483.2" y="338" width="1.800" height="2" fill="#a8a8a8"/><rect x="499.3" y="338" width="1.800" height="3" fill="#a8a8a8"/><rect x="515.4" y="338" width="1.800" height="2" fill="#a8a8a8"/><rect x="531.5" y="338" width="1.800" height="3" fill="#a8a8a8"/><rect x="547.6" y="338" width="1.800" height="2" fill="#a8a8a8"/><rect x="563.7" y="338" width="1.800" height="3" fill="#a8a8a8"/><rect x="579.8" y="338" width="1.800" height="2" fill="#a8a8a8"/><rect x="595.9" y="338" width="1.800" height="3" fill="#a8a8a8"/><rect x="612.0" y="338" width="1.800" height="2" fill="#a8a8a8"/><rect x="628.1" y="338" width="1.800" height="4.5" fill="#a8a8a8"/><rect x="644.2" y="338" width="1.800" height="2" fill="#a8a8a8"/><rect x="660.3" y="338" width="1.800" height="3" fill="#a8a8a8"/><rect x="676.4" y="338" width="1.800" height="2" fill="#a8a8a8"/><rect x="692.5" y="338" width="1.800" height="3" fill="#a8a8a8"/><rect x="708.6" y="338" width="1.800" height="2" fill="#a8a8a8"/><rect x="724.7" y="338" width="1.800" height="3" fill="#a8a8a8"/><rect x="740.8" y="338" width="1.800" height="2" fill="#a8a8a8"/><rect x="756.9" y="338" width="1.800" height="3" fill="#a8a8a8"/><rect x="773.0" y="338" width="1.800" height="2" fill="#a8a8a8"/><rect x="789.1" y="338" width="1.800" height="4.5" fill="#a8a8a8"/><rect x="805.2" y="338" width="1.800" height="2" fill="#a8a8a8"/><rect x="821.3" y="338" width="1.800" height="3" fill="#a8a8a8"/><rect x="837.4" y="338" width="1.800" height="2" fill="#a8a8a8"/><rect x="853.5" y="338" width="1.800" height="3" fill="#a8a8a8"/><rect x="869.6" y="338" width="1.800" height="2" fill="#a8a8a8"/><rect x="885.7" y="338" width="1.800" height="3" fill="#a8a8a8"/><rect x="901.8" y="338" width="1.800" height="2" fill="#a8a8a8"/><rect x="917.9" y="338" width="1.800" height="3" fill="#a8a8a8"/><rect x="934.0" y="338" width="1.800" height="2" fill="#a8a8a8"/><rect x="950.1" y="338" width="1.800" height="4.5" fill="#a8a8a8"/><rect x="966.2" y="338" width="1.800" height="2" fill="#a8a8a8"/><rect x="982.3" y="338" width="1.800" height="3" fill="#a8a8a8"/><rect x="998.4" y="338" width="1.800" height="2" fill="#a8a8a8"/><rect x="1014.5" y="338" width="1.800" height="3" fill="#a8a8a8"/><rect x="1030.6" y="338" width="1.800" height="2" fill="#a8a8a8"/><rect x="1046.7" y="338" width="1.800" height="3" fill="#a8a8a8"/><rect x="1062.8" y="338" width="1.800" height="2" fill="#a8a8a8"/><rect x="1078.9" y="338" width="1.800" height="3" fill="#a8a8a8"/><rect x="1095.0" y="338" width="1.800" height="2" fill="#a8a8a8"/><rect x="1111.1" y="338" width="1.800" height="4.5" fill="#a8a8a8"/><rect x="1127.2" y="338" width="1.800" height="2" fill="#a8a8a8"/><rect x="1143.3" y="338" width="1.800" height="3" fill="#a8a8a8"/><rect x="1159.4" y="338" width="1.800" height="2" fill="#a8a8a8"/><rect x="1175.5" y="338" width="1.800" height="3" fill="#a8a8a8"/><rect x="1191.6" y="338" width="1.800" height="2" fill="#a8a8a8"/><rect x="1207.7" y="338" width="1.800" height="3" fill="#a8a8a8"/><rect x="1223.8" y="338" width="1.800" height="2" fill="#a8a8a8"/><rect x="1239.9" y="338" width="1.800" height="3" fill="#a8a8a8"/><rect x="1256.0" y="338" width="1.800" height="2" fill="#a8a8a8"/><rect x="1272.1" y="338" width="1.800" height="4.5" fill="#a8a8a8"/><rect x="1288.2" y="338" width="1.800" height="2" fill="#a8a8a8"/><rect x="1304.3" y="338" width="1.800" height="3" fill="#a8a8a8"/><rect x="1320.4" y="338" width="1.800" height="2" fill="#a8a8a8"/></svg>
<span class="t" style='left:292.75px;top:347.00px;font:10px/10px "Liberation Sans",sans-serif;color:#f0f0f0;transform:scaleX(0.9645);transform-origin:0 0;'>47.850</span>
<span class="t" style='left:453.75px;top:347.00px;font:10px/10px "Liberation Sans",sans-serif;color:#f0f0f0;transform:scaleX(0.9645);transform-origin:0 0;'>47.900</span>
<span class="t" style='left:614.75px;top:347.00px;font:10px/10px "Liberation Sans",sans-serif;color:#f0f0f0;transform:scaleX(0.9645);transform-origin:0 0;'>47.950</span>
<span class="t" style='left:775.75px;top:347.00px;font:10px/10px "Liberation Sans",sans-serif;color:#f0f0f0;transform:scaleX(0.9645);transform-origin:0 0;'>48.000</span>
<span class="t" style='left:936.75px;top:347.00px;font:10px/10px "Liberation Sans",sans-serif;color:#f0f0f0;transform:scaleX(0.9645);transform-origin:0 0;'>48.050</span>
<span class="t" style='left:1097.75px;top:347.00px;font:10px/10px "Liberation Sans",sans-serif;color:#f0f0f0;transform:scaleX(0.9645);transform-origin:0 0;'>48.100</span>
<span class="t" style='left:1258.75px;top:347.00px;font:10px/10px "Liberation Sans",sans-serif;color:#f0f0f0;transform:scaleX(0.9645);transform-origin:0 0;'>48.150</span>
<div class="r" style="left:268px;top:358px;width:1058px;height:6px;background:#f2f2f2;"></div>
<div class="r" style="left:766px;top:360px;width:62px;height:2px;background:repeating-linear-gradient(90deg,#6e6e6e 0 2px,transparent 2px 4px)"></div>
<div class="r" style="left:326px;top:56px;width:263px;height:102px;background:linear-gradient(rgba(0,0,0,0.97) 0,rgba(0,0,0,0.97) 42%,rgba(0,0,0,0.78) 46%,rgba(0,0,0,0.78) 100%);border:1px solid #1c1c1c"></div>
<svg style="left:0;top:0" width="600" height="170" viewBox="0 0 600 170"><path d="M351.8 108.0 A302.4 302.4 0 0 1 562.8 108.0" fill="none" stroke="#f4f4f4" stroke-width="3"/><line x1="351.8" y1="108.0" x2="347.6" y2="96.8" stroke="#e8e8e8" stroke-width="1.8"/><line x1="366.4" y1="103.0" x2="364.0" y2="95.4" stroke="#e8e8e8" stroke-width="1"/><line x1="381.2" y1="98.7" x2="378.1" y2="87.1" stroke="#e8e8e8" stroke-width="1.8"/><line x1="396.1" y1="95.2" x2="394.5" y2="87.4" stroke="#e8e8e8" stroke-width="1"/><line x1="411.3" y1="92.5" x2="409.5" y2="80.7" stroke="#e8e8e8" stroke-width="1.8"/><line x1="426.6" y1="90.6" x2="425.7" y2="82.6" stroke="#e8e8e8" stroke-width="1"/><line x1="441.9" y1="89.4" x2="441.3" y2="77.4" stroke="#e8e8e8" stroke-width="1.8"/><line x1="457.3" y1="89.0" x2="457.3" y2="81.0" stroke="#e8e8e8" stroke-width="1"/><line x1="472.7" y1="89.4" x2="473.3" y2="77.4" stroke="#e8e8e8" stroke-width="1.8"/><line x1="488.0" y1="90.6" x2="488.9" y2="82.6" stroke="#e8e8e8" stroke-width="1"/><line x1="503.3" y1="92.5" x2="505.1" y2="80.7" stroke="#e8e8e8" stroke-width="1.8"/><line x1="518.5" y1="95.2" x2="520.1" y2="87.4" stroke="#e8e8e8" stroke-width="1"/><line x1="533.4" y1="98.7" x2="536.5" y2="87.1" stroke="#e8e8e8" stroke-width="1.8"/><line x1="548.2" y1="103.0" x2="550.6" y2="95.4" stroke="#e8e8e8" stroke-width="1"/><line x1="562.8" y1="108.0" x2="567.0" y2="96.8" stroke="#e8e8e8" stroke-width="1.8"/></svg>
<span class="t" style='left:333.00px;top:59.00px;font:13px/13px "Liberation Sans",sans-serif;color:#e6e6e6;transform:scaleX(0.9727);transform-origin:0 0;'>dBm</span>
<span class="t" style='left:337.00px;top:84.00px;font:italic 10.5px/10.5px "Liberation Sans",sans-serif;color:#d8d8d8;'>-140</span>
<span class="t" style='left:367.00px;top:75.00px;font:italic 10.5px/10.5px "Liberation Sans",sans-serif;color:#d8d8d8;transform:scaleX(1.0278);transform-origin:0 0;'>-120</span>
<span class="t" style='left:399.50px;top:68.00px;font:italic 10.5px/10.5px "Liberation Sans",sans-serif;color:#d8d8d8;transform:scaleX(0.9755);transform-origin:0 0;'>-100</span>
<span class="t" style='left:434.80px;top:65.00px;font:italic 10.5px/10.5px "Liberation Sans",sans-serif;color:#d8d8d8;transform:scaleX(0.9686);transform-origin:0 0;'>-80</span>
<span class="t" style='left:466.50px;top:65.00px;font:italic 10.5px/10.5px "Liberation Sans",sans-serif;color:#d8d8d8;transform:scaleX(1.0214);transform-origin:0 0;'>-60</span>
<span class="t" style='left:498.70px;top:68.00px;font:italic 10.5px/10.5px "Liberation Sans",sans-serif;color:#d8d8d8;transform:scaleX(0.9884);transform-origin:0 0;'>-40</span>
<span class="t" style='left:529.50px;top:75.00px;font:italic 10.5px/10.5px "Liberation Sans",sans-serif;color:#d8d8d8;transform:scaleX(1.0214);transform-origin:0 0;'>-20</span>
<span class="t" style='left:565.50px;top:84.00px;font:italic 10.5px/10.5px "Liberation Sans",sans-serif;color:#d8d8d8;'>0</span>
<svg style="left:0;top:0" width="600" height="170" viewBox="0 0 600 170"><line x1="388.700" y1="81.800" x2="405.700" y2="160.300" stroke="#000" stroke-width="3.600"/><line x1="476.800" y1="68.400" x2="471" y2="160.300" stroke="#000" stroke-width="4"/><line x1="388.700" y1="81.800" x2="405.700" y2="160.300" stroke="#9a9a9a" stroke-width="1"/><line x1="476.800" y1="68.400" x2="471" y2="160.300" stroke="#e01818" stroke-width="1.800"/></svg>
<div class="r" style="left:430.3px;top:128px;width:54.3px;height:18.7px;background:#b7cb35;border-radius:3px"></div>
<span class="t" style='left:441.50px;top:131.00px;font:bold 14px/14px "Liberation Sans",sans-serif;color:#111;'>-58.4</span>
<div class="r" style="left:268px;top:364px;width:1058px;height:330px;background:#020220;"></div>
<svg style="left:0;top:0" width="1366" height="700" viewBox="0 0 1366 700"><path d="M298.3 369.0V399.7M298.3 408.0V446.0M298.3 453.9V491.1M298.3 493.3V514.1M298.3 523.6V551.0M298.3 560.2V568.3M298.3 574.0V586.9M298.3 593.3V617.9M298.3 620.0V631.8M298.3 636.1V673.1M298.3 681.2V690.9" stroke="#1f2664" stroke-width="1.100" fill="none"/><path d="M392.4 365.1V391.3M392.4 394.4V398.4M392.4 407.4V418.9M392.4 422.7V462.0M392.4 471.0V485.4M392.4 495.1V518.5M392.4 525.9V537.3M392.4 546.8V575.7M392.4 585.4V621.6M392.4 626.0V643.0M392.4 646.3V655.6M392.4 658.1V672.9M392.4 679.8V683.9M392.4 691.3V694.0" stroke="#1f2664" stroke-width="1.100" fill="none"/><path d="M397.0 370.5V378.3M397.0 390.5V398.3M397.0 420.6V423.3M397.0 452.7V454.9M397.0 478.4V490.6M397.0 495.0V506.5M397.0 520.0V529.0M397.0 533.2V535.8M397.0 544.5V557.9M397.0 567.0V578.1M397.0 606.3V619.6M397.0 632.5V638.8M397.0 656.4V667.7M397.0 674.5V685.5" stroke="#13174a" stroke-width="1.100" fill="none"/><rect x="495.0" y="364" width="1.200" height="330" fill="#34449c"/><path d="M593.2 370.9V376.2M593.2 385.8V393.0M593.2 397.8V423.8M593.2 433.1V449.3M593.2 458.7V482.4M593.2 486.9V502.3M593.2 505.7V512.5M593.2 515.7V544.5M593.2 554.5V564.3M593.2 566.7V606.2M593.2 612.5V631.1M593.2 635.0V660.4M593.2 669.0V689.4" stroke="#1f2664" stroke-width="1.100" fill="none"/><path d="M631.5 364.4V377.4M631.5 382.3V390.2M631.5 416.0V419.6M631.5 442.6V456.0M631.5 476.4V487.8M631.5 494.6V501.8M631.5 509.7V521.8M631.5 533.5V541.0M631.5 570.9V583.2M631.5 612.5V620.0M631.5 636.7V647.4M631.5 663.9V669.4M631.5 683.9V687.6" stroke="#13174a" stroke-width="1.100" fill="none"/><rect x="695.8" y="364" width="1.300" height="330" fill="#7f9ae8"/><path d="M701.3 371.9V410.5M701.3 417.5V439.5M701.3 444.2V451.4M701.3 455.5V487.7M701.3 496.6V513.6M701.3 521.9V553.8M701.3 561.4V589.3M701.3 597.4V614.5M701.3 622.1V636.2M701.3 642.1V673.8M701.3 681.3V694.0" stroke="#1f2664" stroke-width="1.100" fill="none"/><path d="M757.3 369.2V394.1M757.3 396.2V419.9M757.3 423.9V452.1M757.3 457.8V491.2M757.3 498.4V531.1M757.3 535.9V563.0M757.3 570.9V604.8M757.3 609.6V643.9M757.3 652.9V681.6M757.3 691.4V694.0" stroke="#1f2664" stroke-width="1.100" fill="none"/><rect x="785.8" y="364" width="1.300" height="330" fill="#7f9ae8"/><rect x="798.9" y="364" width="1.300" height="330" fill="#7f9ae8"/><rect x="803.9" y="364" width="1.300" height="330" fill="#7f9ae8"/><rect x="835.8" y="364" width="1.200" height="330" fill="#5068c4"/><path d="M903.6 368.2V372.2M903.6 398.0V411.2M903.6 427.6V437.9M903.6 460.6V471.4M903.6 479.9V491.2M903.6 510.3V520.3M903.6 535.3V544.8M903.6 568.9V578.5M903.6 601.3V603.6M903.6 611.8V619.1M903.6 640.0V644.6M903.6 666.4V676.0M903.6 681.1V688.7" stroke="#13174a" stroke-width="1.100" fill="none"/><path d="M908.6 364.4V368.0M908.6 380.3V384.5M908.6 393.5V395.9M908.6 412.0V418.6M908.6 438.5V447.6M908.6 457.8V470.6M908.6 474.6V481.5M908.6 492.7V499.6M908.6 506.6V518.6M908.6 532.3V534.8M908.6 554.7V557.8M908.6 576.0V582.1M908.6 601.2V614.7M908.6 640.0V647.0M908.6 672.1V681.9" stroke="#13174a" stroke-width="1.100" fill="none"/><rect x="1001.2" y="364" width="1.300" height="330" fill="#7f9ae8"/><rect x="1005.8" y="364" width="1.300" height="330" fill="#7f9ae8"/><rect x="1104.0" y="364" width="1.300" height="330" fill="#7f9ae8"/><rect x="1109.0" y="364" width="1.300" height="330" fill="#7f9ae8"/><path d="M1212.3 365.1V390.6M1212.3 397.1V435.6M1212.3 445.3V471.2M1212.3 476.0V512.2M1212.3 514.2V522.1M1212.3 528.6V554.8M1212.3 557.9V584.5M1212.3 593.7V611.2M1212.3 616.7V628.8M1212.3 633.1V672.1M1212.3 677.2V694.0" stroke="#1f2664" stroke-width="1.100" fill="none"/><path d="M1305.6 368.8V382.1M1305.6 392.0V413.8M1305.6 419.2V434.6M1305.6 444.5V466.2M1305.6 470.5V491.7M1305.6 494.7V521.0M1305.6 526.6V541.1M1305.6 549.4V583.2M1305.6 585.3V608.4M1305.6 612.6V650.3M1305.6 658.6V671.4M1305.6 675.5V685.1" stroke="#1f2664" stroke-width="1.100" fill="none"/><rect x="1309.9" y="364" width="1.200" height="330" fill="#34449c"/><path d="M495.6 364.0V372.0M495.6 406.3V417.4M495.6 453.2V466.4M495.6 506.2V511.2M495.6 551.6V559.7M495.6 591.1V599.8M495.6 621.6V633.6M495.6 662.2V671.4" stroke="#6a84dc" stroke-width="1.100" fill="none"/><path d="M836.4 364.0V377.0M836.4 388.5V395.8M836.4 424.0V442.6M836.4 488.1V500.4M836.4 511.0V527.2M836.4 554.3V567.1M836.4 605.4V619.2M836.4 648.5V667.0M836.4 692.4V694.0" stroke="#6a84dc" stroke-width="1.100" fill="none"/><path d="M1310.5 364.0V370.3M1310.5 392.2V409.3M1310.5 422.0V439.2M1310.5 477.0V487.3M1310.5 508.8V525.0M1310.5 571.5V576.9M1310.5 606.0V618.4M1310.5 648.3V656.9M1310.5 673.0V686.0" stroke="#6a84dc" stroke-width="1.100" fill="none"/><path d="M792.500 364V694M801.600 364V694" stroke="#3fba52" stroke-width="1.200" stroke-dasharray="4 2" fill="none"/><rect x="795.700" y="364" width="1.500" height="330" fill="#f2f200"/><path d="M500.500 364V694M509.600 364V694" stroke="#000" stroke-width="3" fill="none"/><path d="M500.500 364V694M509.600 364V694" stroke="#fff" stroke-width="1.300" stroke-dasharray="4 4" stroke-dashoffset="-2" fill="none"/></svg>
<div class="r" style="left:525px;top:459px;width:108px;height:34.6px;background:rgba(0,0,8,0.86);border-radius:5px"></div>
<span class="t" style='left:535.10px;top:471.00px;font:15px/15px "Liberation Mono",monospace;color:#fff;transform:scaleX(0.9798);transform-origin:0 0;'>47.909.850</span>
<div class="r" style="left:709.5px;top:625px;width:174.7px;height:58.8px;background:rgba(0,0,8,0.84);border-radius:6px"></div>
<span class="t" style='left:719.00px;top:638.00px;font:13px/13px "Liberation Mono",monospace;color:#fff;transform:scaleX(1.0525);transform-origin:0 0;'>Freq: 48.001.85 MHz</span>
<span class="t" style='left:719.00px;top:661.00px;font:13px/13px "Liberation Mono",monospace;color:#fff;transform:scaleX(1.0525);transform-origin:0 0;white-space:pre;'>Span:  ±163.940 kHz</span>
<div class="r" style="left:1326px;top:51px;width:1px;height:671px;background:#a8a8a8;"></div>
<div class="r" style="left:1327px;top:51px;width:37px;height:671px;background:#000;"></div>
<div class="r" style="left:1364px;top:51px;width:2px;height:671px;background:#e9edfb;"></div>
<div class="r" style="left:1328px;top:51px;width:36px;height:15px;background:linear-gradient(#2c2c2c,#3c3c3c);"></div>
<div class="r" style="left:1328px;top:80px;width:36px;height:1px;background:#4a4a4a;"></div>
<span class="t" style='left:1334.25px;top:61.00px;font:11.5px/11.5px "Liberation Sans",sans-serif;color:#f4f4f4;transform:scaleX(0.9934);transform-origin:0 0;'>Auto</span>
<div class="r" style="left:1329px;top:396px;width:34px;height:76.5px;background:linear-gradient(#ece400 0,#ece400 3%,#f6c860 4.500%,#fff 6%,#fff 31%,#dfe8fa 38%,#b8ccf6 44%,#6f8fe6 58%,#3e58b8 68%,#26348a 78%,#141a5a 88%,#06062a 100%);"></div>
<div class="r" style="left:1329px;top:472px;width:34px;height:1.5px;background:#fff;"></div>
<div class="r" style="left:1332px;top:397px;width:28px;height:13px;background:rgba(70,70,70,0.78);border-radius:0 0 4px 4px"></div>
<div class="r" style="left:1332px;top:432.5px;width:28px;height:17px;background:rgba(44,60,110,0.8);border-radius:4px"></div>
<span class="t" style='left:1340.45px;top:118.00px;font:8px/8px "Liberation Sans",sans-serif;color:#a6a6a6;transform:scaleX(0.9600);transform-origin:0 0;'>-10</span>
<span class="t" style='left:1340.45px;top:158.00px;font:8px/8px "Liberation Sans",sans-serif;color:#a6a6a6;transform:scaleX(0.9600);transform-origin:0 0;'>-20</span>
<span class="t" style='left:1340.45px;top:198.00px;font:8px/8px "Liberation Sans",sans-serif;color:#a6a6a6;transform:scaleX(0.9600);transform-origin:0 0;'>-30</span>
<span class="t" style='left:1340.45px;top:238.00px;font:8px/8px "Liberation Sans",sans-serif;color:#a6a6a6;transform:scaleX(0.9600);transform-origin:0 0;'>-40</span>
<span class="t" style='left:1340.45px;top:278.00px;font:8px/8px "Liberation Sans",sans-serif;color:#a6a6a6;transform:scaleX(0.9600);transform-origin:0 0;'>-50</span>
<span class="t" style='left:1340.45px;top:318.00px;font:8px/8px "Liberation Sans",sans-serif;color:#a6a6a6;transform:scaleX(0.9600);transform-origin:0 0;'>-60</span>
<span class="t" style='left:1340.45px;top:358.00px;font:8px/8px "Liberation Sans",sans-serif;color:#a6a6a6;transform:scaleX(0.9600);transform-origin:0 0;'>-70</span>
<span class="t" style='left:1340.45px;top:398.00px;font:8px/8px "Liberation Sans",sans-serif;color:#dcdcdc;transform:scaleX(0.9600);transform-origin:0 0;'>-80</span>
<span class="t" style='left:1340.45px;top:438.00px;font:8px/8px "Liberation Sans",sans-serif;color:#dcdcdc;transform:scaleX(0.9600);transform-origin:0 0;'>-90</span>
<span class="t" style='left:1338.10px;top:478.00px;font:8px/8px "Liberation Sans",sans-serif;color:#a6a6a6;transform:scaleX(0.9868);transform-origin:0 0;'>-100</span>
<span class="t" style='left:1338.10px;top:518.00px;font:8px/8px "Liberation Sans",sans-serif;color:#a6a6a6;transform:scaleX(1.0248);transform-origin:0 0;'>-110</span>
<span class="t" style='left:1338.10px;top:558.00px;font:8px/8px "Liberation Sans",sans-serif;color:#a6a6a6;transform:scaleX(0.9868);transform-origin:0 0;'>-120</span>
<span class="t" style='left:1338.10px;top:598.00px;font:8px/8px "Liberation Sans",sans-serif;color:#a6a6a6;transform:scaleX(0.9868);transform-origin:0 0;'>-130</span>
<span class="t" style='left:1338.10px;top:638.00px;font:8px/8px "Liberation Sans",sans-serif;color:#a6a6a6;transform:scaleX(0.9868);transform-origin:0 0;'>-140</span>
<span class="t" style='left:1338.10px;top:678.00px;font:8px/8px "Liberation Sans",sans-serif;color:#a6a6a6;transform:scaleX(0.9868);transform-origin:0 0;'>-150</span>
<div class="r" style="left:268px;top:694px;width:1058px;height:27px;background:#ececec;"></div>
<div class="r" style="left:295px;top:694px;width:913px;height:27px;background:#000;"></div>
<div class="r" style="left:295px;top:694px;width:913px;height:6px;background:linear-gradient(#7a7a7a 0,#5a5a5a 18%,#2a2a2a);"></div>
<div class="r" style="left:295px;top:700px;width:913px;height:8px;background:linear-gradient(#222,#000);"></div>
<div class="r" style="left:523px;top:694px;width:457px;height:27px;background:linear-gradient(#8a8a8a 0,#5e5e5e 4%,#565656 22%,#3c3c3c 40%,#323232 100%);border-left:1px solid #bdbdbd;border-right:1px solid #bdbdbd;overflow:hidden"></div>
<div class="r" style="left:524px;top:694px;width:455px;height:27px;background:radial-gradient(ellipse 255px 17px at 50% 105%,rgba(142,142,12,0.95) 0,rgba(136,136,12,0.85) 50%,rgba(125,125,10,0.42) 78%,rgba(120,120,0,0) 100%)"></div>
<svg style="left:0;top:0" width="1366" height="730" viewBox="0 0 1366 730"><rect x="302.2" y="695" width="1.900" height="3.7" fill="#8c8c8c"/><rect x="316.1" y="695" width="1.900" height="2.5" fill="#8c8c8c"/><rect x="330.0" y="695" width="1.900" height="5" fill="#8c8c8c"/><rect x="343.9" y="695" width="1.900" height="2.5" fill="#8c8c8c"/><rect x="357.8" y="695" width="1.900" height="3.7" fill="#8c8c8c"/><rect x="371.7" y="695" width="1.900" height="2.5" fill="#8c8c8c"/><rect x="385.6" y="695" width="1.900" height="3.7" fill="#8c8c8c"/><rect x="399.5" y="695" width="1.900" height="2.5" fill="#8c8c8c"/><rect x="413.4" y="695" width="1.900" height="3.7" fill="#8c8c8c"/><rect x="427.3" y="695" width="1.900" height="2.5" fill="#8c8c8c"/><rect x="441.2" y="695" width="1.900" height="3.7" fill="#8c8c8c"/><rect x="455.1" y="695" width="1.900" height="2.5" fill="#8c8c8c"/><rect x="469.0" y="695" width="1.900" height="5" fill="#8c8c8c"/><rect x="482.9" y="695" width="1.900" height="2.5" fill="#8c8c8c"/><rect x="496.8" y="695" width="1.900" height="3.7" fill="#8c8c8c"/><rect x="510.7" y="695" width="1.900" height="2.5" fill="#8c8c8c"/><rect x="524.6" y="695" width="1.900" height="3.7" fill="#8c8c8c"/><rect x="538.5" y="695" width="1.900" height="2.5" fill="#8c8c8c"/><rect x="552.4" y="695" width="1.900" height="3.7" fill="#8c8c8c"/><rect x="566.3" y="695" width="1.900" height="2.5" fill="#8c8c8c"/><rect x="580.2" y="695" width="1.900" height="3.7" fill="#8c8c8c"/><rect x="594.1" y="695" width="1.900" height="2.5" fill="#8c8c8c"/><rect x="608.0" y="695" width="1.900" height="5" fill="#8c8c8c"/><rect x="621.9" y="695" width="1.900" height="2.5" fill="#8c8c8c"/><rect x="635.8" y="695" width="1.900" height="3.7" fill="#8c8c8c"/><rect x="649.7" y="695" width="1.900" height="2.5" fill="#8c8c8c"/><rect x="663.6" y="695" width="1.900" height="3.7" fill="#8c8c8c"/><rect x="677.5" y="695" width="1.900" height="2.5" fill="#8c8c8c"/><rect x="691.4" y="695" width="1.900" height="3.7" fill="#8c8c8c"/><rect x="705.3" y="695" width="1.900" height="2.5" fill="#8c8c8c"/><rect x="719.2" y="695" width="1.900" height="3.7" fill="#8c8c8c"/><rect x="733.1" y="695" width="1.900" height="2.5" fill="#8c8c8c"/><rect x="747.0" y="695" width="1.900" height="5" fill="#8c8c8c"/><rect x="760.9" y="695" width="1.900" height="2.5" fill="#8c8c8c"/><rect x="774.8" y="695" width="1.900" height="3.7" fill="#8c8c8c"/><rect x="788.7" y="695" width="1.900" height="2.5" fill="#8c8c8c"/><rect x="802.6" y="695" width="1.900" height="3.7" fill="#8c8c8c"/><rect x="816.5" y="695" width="1.900" height="2.5" fill="#8c8c8c"/><rect x="830.4" y="695" width="1.900" height="3.7" fill="#8c8c8c"/><rect x="844.3" y="695" width="1.900" height="2.5" fill="#8c8c8c"/><rect x="858.2" y="695" width="1.900" height="3.7" fill="#8c8c8c"/><rect x="872.1" y="695" width="1.900" height="2.5" fill="#8c8c8c"/><rect x="886.0" y="695" width="1.900" height="5" fill="#8c8c8c"/><rect x="899.9" y="695" width="1.900" height="2.5" fill="#8c8c8c"/><rect x="913.8" y="695" width="1.900" height="3.7" fill="#8c8c8c"/><rect x="927.7" y="695" width="1.900" height="2.5" fill="#8c8c8c"/><rect x="941.6" y="695" width="1.900" height="3.7" fill="#8c8c8c"/><rect x="955.5" y="695" width="1.900" height="2.5" fill="#8c8c8c"/><rect x="969.4" y="695" width="1.900" height="3.7" fill="#8c8c8c"/><rect x="983.3" y="695" width="1.900" height="2.5" fill="#8c8c8c"/><rect x="997.2" y="695" width="1.900" height="3.7" fill="#8c8c8c"/><rect x="1011.1" y="695" width="1.900" height="2.5" fill="#8c8c8c"/><rect x="1025.0" y="695" width="1.900" height="5" fill="#8c8c8c"/><rect x="1038.9" y="695" width="1.900" height="2.5" fill="#8c8c8c"/><rect x="1052.8" y="695" width="1.900" height="3.7" fill="#8c8c8c"/><rect x="1066.7" y="695" width="1.900" height="2.5" fill="#8c8c8c"/><rect x="1080.6" y="695" width="1.900" height="3.7" fill="#8c8c8c"/><rect x="1094.5" y="695" width="1.900" height="2.5" fill="#8c8c8c"/><rect x="1108.4" y="695" width="1.900" height="3.7" fill="#8c8c8c"/><rect x="1122.3" y="695" width="1.900" height="2.5" fill="#8c8c8c"/><rect x="1136.2" y="695" width="1.900" height="3.7" fill="#8c8c8c"/><rect x="1150.1" y="695" width="1.900" height="2.5" fill="#8c8c8c"/><rect x="1164.0" y="695" width="1.900" height="5" fill="#8c8c8c"/><rect x="1177.9" y="695" width="1.900" height="2.5" fill="#8c8c8c"/><rect x="1191.8" y="695" width="1.900" height="3.7" fill="#8c8c8c"/><rect x="1205.7" y="695" width="1.900" height="2.5" fill="#8c8c8c"/><rect x="750.900" y="695" width="1.300" height="26" fill="#f0f000"/></svg>
<span class="t" style='left:312.30px;top:705.00px;font:13px/13px "Liberation Sans",sans-serif;color:#bababa;transform:scaleX(0.9557);transform-origin:0 0;'>47.700</span>
<span class="t" style='left:451.20px;top:705.00px;font:13px/13px "Liberation Sans",sans-serif;color:#bababa;transform:scaleX(0.9557);transform-origin:0 0;'>47.800</span>
<span class="t" style='left:590.10px;top:705.00px;font:13px/13px "Liberation Sans",sans-serif;color:#bababa;transform:scaleX(0.9557);transform-origin:0 0;'>47.900</span>
<span class="t" style='left:729.00px;top:705.00px;font:13px/13px "Liberation Sans",sans-serif;color:#bababa;transform:scaleX(0.9557);transform-origin:0 0;'>48.000</span>
<span class="t" style='left:867.90px;top:705.00px;font:13px/13px "Liberation Sans",sans-serif;color:#bababa;transform:scaleX(0.9557);transform-origin:0 0;'>48.100</span>
<span class="t" style='left:1006.80px;top:705.00px;font:13px/13px "Liberation Sans",sans-serif;color:#bababa;transform:scaleX(0.9557);transform-origin:0 0;'>48.200</span>
<span class="t" style='left:1145.70px;top:705.00px;font:13px/13px "Liberation Sans",sans-serif;color:#bababa;transform:scaleX(0.9557);transform-origin:0 0;'>48.300</span>
<div class="r" style="left:269px;top:696px;width:25.5px;height:24px;background:#e1e1e1;border:1px solid #adadad"></div>
<div class="r" style="left:1209px;top:696px;width:37px;height:24px;background:#e1e1e1;border:1px solid #adadad"></div>
<div class="r" style="left:1248px;top:696px;width:49.5px;height:24px;background:#e1e1e1;border:1px solid #adadad"></div>
<div class="r" style="left:1300px;top:696px;width:24px;height:24px;background:#e1e1e1;border:1px solid #adadad"></div>
<svg style="left:273px;top:699px" width="18" height="18" viewBox="0 0 18 18"><circle cx="9" cy="9" r="7.300" fill="#f4f4f4" stroke="#333" stroke-width="1.200"/><path d="M8.500 6v6L5 9zM12.500 6v6L9 9z" fill="#222"/></svg>
<svg style="left:1303px;top:699px" width="18" height="18" viewBox="0 0 18 18"><circle cx="9" cy="9" r="7.300" fill="#f4f4f4" stroke="#333" stroke-width="1.200"/><path d="M5.500 6v6L9 9zM9.500 6v6L13 9z" fill="#222"/></svg>
<svg style="left:1218px;top:701px" width="20" height="14" viewBox="0 0 20 14"><rect x="1.500" y="4.500" width="16" height="8" fill="none" stroke="#444" stroke-width="1"/><path d="M3.500 6.500h12M3.500 8.500h12M5 10.500h9" stroke="#444" stroke-width="1" stroke-dasharray="1 1"/><path d="M9.500 4.500c0-2 2-1 3-3" stroke="#444" fill="none"/></svg>
<span class="t" style='left:1257.00px;top:702.00px;font:12px/12px "Liberation Sans",sans-serif;color:#1a1a2a;transform:scaleX(0.9468);transform-origin:0 0;'>x2</span>
<svg style="left:1285.500px;top:704.500px" width="6" height="8" viewBox="0 0 6 8"><path d="M0.300 0v7.600l4.500-3.800z" fill="#111"/></svg>
<div class="r" style="left:0px;top:722px;width:1366px;height:46px;background:#f0f0f0;"></div>
<div class="r" style="left:0px;top:721px;width:1326px;height:1.5px;background:#fafafa;"></div>
<div class="r" style="left:0;top:726px;width:1366px;height:13px;overflow:hidden"><span class="t" style='left:9.50px;top:3.00px;font:11.5px/11.5px "Liberation Sans",sans-serif;color:#6a6a6a;transform:scaleX(0.9436);transform-origin:0 0;'>RTL Dongle USB - R820T, BW = 1.000 MHz</span><span class="t" style='left:1041.40px;top:3.00px;font:11.5px/11.5px "Liberation Sans",sans-serif;color:#111;transform:scaleX(0.8945);transform-origin:0 0;'>CPU: 10.0%</span><span class="t" style='left:1196.50px;top:3.00px;font:11.5px/11.5px "Liberation Sans",sans-serif;color:#111;transform:scaleX(0.9730);transform-origin:0 0;'>Audio: 45ms</span><div class="r" style="left:1112px;top:3px;width:70px;height:14px;background:#e6e6e6;border:1px solid #bcbcbc"></div><div class="r" style="left:1115px;top:6px;width:1px;height:8px;background:#1aa51a"></div><div class="r" style="left:1273px;top:3px;width:70px;height:14px;background:#e6e6e6;border:1px solid #bcbcbc"></div><div class="r" style="left:1276px;top:6px;width:37px;height:8px;background:#12a81e"></div></div>
<div class="r" style="left:0px;top:739px;width:1366px;height:29px;background:#eeeeee;"></div>
<svg style="left:10px;top:744px" width="17" height="18" viewBox="0 0 17 18"><path d="M0 2.600L7.200 1.600V8.400H0zM8.200 1.400L16.400 0.200V8.400H8.200zM0 9.400H7.200V16.200L0 15.200zM8.200 9.400H16.400V17.600L8.200 16.400z" fill="#000"/></svg>
<svg style="left:45px;top:744px" width="19" height="18" viewBox="0 0 19 18"><circle cx="11.400" cy="6.400" r="5" fill="none" stroke="#111" stroke-width="1.500"/><path d="M7.800 10L1.500 16.700" stroke="#111" stroke-width="1.700"/></svg>
<svg style="left:81px;top:744px" width="18" height="18" viewBox="0 0 18 18"><circle cx="8.800" cy="8.600" r="6.500" fill="none" stroke="#111" stroke-width="2.300"/></svg>
<svg style="left:117px;top:744px" width="18" height="17" viewBox="0 0 18 17"><path d="M1 1.200h10.500M1 15.200h10.500M14.500 0.500v2.500M14.500 9v6.700" stroke="#111" stroke-width="1.300" fill="none"/><rect x="2" y="4.500" width="8.500" height="7.500" fill="none" stroke="#111" stroke-width="1.400"/><rect x="13.200" y="5" width="2.800" height="2.600" fill="#111"/></svg>
<svg style="left:156px;top:745px" width="18" height="16" viewBox="0 0 18 16"><path d="M1 1h5.500l1.500 2H17v12H1z" fill="#e8a92c"/><path d="M1 4.500h16V15H1z" fill="#fbd36c"/><path d="M4.500 15v-5.500h9V15h-2.500v-3h-4v3z" fill="#2f86d8"/></svg>
<svg style="left:193px;top:746px" width="18" height="16" viewBox="0 0 18 16"><rect x="4.500" y="1" width="12.500" height="9.500" fill="#dff1fa" stroke="#b4b4b4" stroke-width="1.400"/><path d="M5.500 6.500l2-2.500 2.500 3.500 2.500-3 2 2.500h1.500" stroke="#2a7ad0" stroke-width="1.100" fill="none"/><path d="M9 11h4v2h-4zM7 13.500h8" stroke="#aaa" stroke-width="1.200" fill="#bbb"/><rect x="1" y="5" width="2" height="9.500" fill="#9a9a9a"/><rect x="1.300" y="6" width="1.400" height="2" fill="#5ac85a"/></svg>
<svg style="left:230px;top:746px" width="18" height="14" viewBox="0 0 18 14"><rect x="1" y="1" width="16" height="11.500" fill="#fafafa" stroke="#8e8e9a" stroke-width="1.200"/><rect x="1" y="1" width="16" height="2.600" fill="#a8a8b4"/><rect x="6" y="5" width="4.500" height="6" fill="#1e6fd8"/><path d="M11.500 6h4M11.500 8h4M11.500 10h4" stroke="#9a9a9a" stroke-width="0.900"/></svg>
<svg style="left:267px;top:744px" width="18" height="18" viewBox="0 0 18 18"><path d="M4.500 2.500h11.500l-1 13.500H2.500z" fill="#a9d4ee" stroke="#7fb3d6" stroke-width="0.600"/><path d="M15.300 3.500l1.200-0.500v13H3.500l0.800-1h10.500z" fill="#e4d2a4"/><path d="M5.500 1v2.500M7.500 1v2.500M9.500 1v2.500M11.500 1v2.500M13.500 1v2.500" stroke="#444" stroke-width="0.900"/><path d="M5 6h9M4.800 8h9M4.600 10h9M4.400 12h9" stroke="#8fc0de" stroke-width="0.800"/></svg>
<svg style="left:304px;top:744px" width="19" height="19" viewBox="0 0 19 19"><rect x="3.500" y="3" width="12" height="13.500" fill="#e8452a"/><path d="M9.500 0.800L18 9.500 9.500 18.200 1 9.500z" fill="#e3b86a" stroke="#c89a4a" stroke-width="0.500"/><path d="M2.500 9.500Q9.500 3.500 16.500 9.500Q9.500 14.500 2.500 9.500z" fill="#fff"/><circle cx="9.500" cy="9.300" r="3" fill="#2a86e0"/><circle cx="9.500" cy="9.300" r="1.400" fill="#0a1a3a"/></svg>
<svg style="left:342px;top:744px" width="16" height="18" viewBox="0 0 16 18"><path d="M0.500 1h13l2 2v14.500h-15z" fill="#1e58c8"/><rect x="4.500" y="1" width="6.500" height="5" fill="#cfe0f6"/><rect x="8" y="1.800" width="2" height="3.400" fill="#1e58c8"/><rect x="2" y="8" width="12" height="7.500" fill="#f6f6f6"/><rect x="2" y="15.500" width="12" height="1.200" fill="#d03a3a"/><text x="8" y="14.300" font-family="Liberation Sans,sans-serif" font-size="7" font-weight="bold" text-anchor="middle" fill="#222">64</text></svg>
<svg style="left:378px;top:744px" width="18" height="18" viewBox="0 0 18 18"><defs><linearGradient id="eg" x1="0" y1="0" x2="1" y2="1"><stop offset="0" stop-color="#35c1a0"/><stop offset="0.500" stop-color="#1d8fd8"/><stop offset="1" stop-color="#0c59b4"/></linearGradient></defs><circle cx="9" cy="9" r="8" fill="url(#eg)"/><path d="M9 1.200A8 8 0 0117 9c0 2.500-2 4-4 4-2.500 0-3.800-1.500-3.800-3 0-1 0.600-1.600 0.600-2.500C9.800 6 8.400 5 6.600 5 4 5 1.800 7 1.200 9.400A8 8 0 019 1.200z" fill="#4cc86a" opacity="0.850"/><path d="M6.800 8.500c-1 2.500 0.200 6 3.400 7.500 1.700 0.700 3.600 0.400 5-0.600-2 2.600-6 3.200-9 1.500C3 15 2.400 10.500 5 8.500z" fill="#0b4fa8"/><ellipse cx="10.200" cy="10" rx="2.600" ry="2.200" fill="#eeeeee"/></svg>
<svg style="left:415px;top:744px" width="18" height="18" viewBox="0 0 18 18"><ellipse cx="9" cy="9" rx="8" ry="8" fill="#e8121d"/><ellipse cx="9.600" cy="9" rx="3.300" ry="5.600" fill="#eeeeee"/><path d="M11 2.200c3 1 4.800 3.800 4.800 6.800s-1.800 5.800-4.800 6.800c2-1.500 3-4 3-6.800s-1-5.300-3-6.800z" fill="#a80a14"/></svg>
<svg style="left:450px;top:744px" width="18" height="18" viewBox="0 0 18 18"><circle cx="9" cy="9" r="8" fill="#c8504a"/><circle cx="9" cy="9" r="7.400" fill="none" stroke="#e0908a" stroke-width="1"/><path d="M9 4.500l-3 10M9 4.500l3 10M7 10h4M6.300 12.500h5.400" stroke="#f0d6d2" stroke-width="0.900" fill="none"/><path d="M5.500 4.500a5 5 0 000 5M12.500 4.500a5 5 0 010 5" stroke="#b8b8c0" stroke-width="1" fill="none"/><circle cx="9" cy="4.500" r="1" fill="#f4e4e0"/></svg>
<span class="t" style='left:471.60px;top:746.00px;font:13px/13px "Liberation Sans",sans-serif;color:#000;transform:scaleX(0.8345);transform-origin:0 0;'>RTL Dongle USB - R82...</span>
<div class="r" style="left:447px;top:766px;width:152px;height:2px;background:#1c4a60;"></div>
<svg style="left:1074px;top:745px" width="17" height="17" viewBox="0 0 17 17"><defs><radialGradient id="gl" cx="0.400" cy="0.350" r="0.700"><stop offset="0" stop-color="#a8d4f6"/><stop offset="1" stop-color="#2a7ad0"/></radialGradient></defs><circle cx="8.500" cy="8.500" r="7.800" fill="url(#gl)"/><path d="M10.500 3l-4 11M8 5l-3 7" stroke="#f4faff" stroke-width="1.400" opacity="0.900"/></svg>
<svg style="left:1097px;top:744px" width="18" height="18" viewBox="0 0 18 18"><circle cx="5.500" cy="5.500" r="4" fill="#fff" stroke="#1a1ac8" stroke-width="1.800"/><path d="M5.500 3.500v2.200h2" stroke="#333" stroke-width="0.900" fill="none"/><path d="M8.500 9.500c0-2 2.500-2 2.500 0v-0.500c0-1.800 2.300-1.800 2.300 0v0.600c0-1.600 2.200-1.600 2.200 0V14c0 2-1.500 3.300-3.500 3.300S8 16 7.500 14.500L6.500 11c1-0.800 1.600-0.300 2 0.500z" fill="#d8d8d8" stroke="#222" stroke-width="0.900"/><path d="M11 12v3M13.300 12v3" stroke="#222" stroke-width="0.900"/></svg>
<svg style="left:1123px;top:744px" width="16" height="19" viewBox="0 0 16 19"><rect x="3.500" y="1" width="5" height="4" fill="none" stroke="#222" stroke-width="1.100"/><rect x="1.500" y="5" width="9" height="12" rx="1" fill="none" stroke="#222" stroke-width="1.200"/><path d="M5 2.500v1M7 2.500v1" stroke="#222" stroke-width="0.800"/><path d="M9.500 15l2 2 3.500-4" stroke="#333" stroke-width="1.100" fill="none"/></svg>
<svg style="left:1144px;top:744px" width="19" height="19" viewBox="0 0 19 19"><path d="M9 1.200L2 3.500v5.500c0 4.200 3 7 7 8.500 4-1.500 7-4.300 7-8.500V3.500z" fill="none" stroke="#1a1a1a" stroke-width="1.300"/><path d="M9 1.500V17M2 9h14" stroke="#1a1a1a" stroke-width="1.100"/><circle cx="13.500" cy="14" r="3.600" fill="#22a04a"/><path d="M11.700 14l1.300 1.400 2.400-2.800" stroke="#fff" stroke-width="1.100" fill="none"/></svg>
<svg style="left:1168px;top:746px" width="20" height="15" viewBox="0 0 20 15"><rect x="7" y="3.500" width="10.500" height="8.500" fill="none" stroke="#222" stroke-width="1.100"/><rect x="17.500" y="6" width="1.500" height="3.500" fill="#222"/><path d="M10 5.500l4.500 4.500M14.500 5.500L10 10" stroke="#222" stroke-width="1"/><path d="M2 1.500v2.500M5 1.500v2.500M1 4h5v2.500c0 1.500-1 2.300-2.500 2.300S1 8 1 6.500zM3.500 9v3.500h3.500" fill="none" stroke="#222" stroke-width="1.100"/></svg>
<svg style="left:1195px;top:746px" width="17" height="16" viewBox="0 0 17 16"><path d="M2 14.500A12.500 12.500 0 0114.500 2" fill="none" stroke="#222" stroke-width="1.100"/><path d="M5.500 14.500A9 9 0 0114.500 5.500" fill="none" stroke="#222" stroke-width="1.100"/><path d="M9 14.500A5.500 5.500 0 0114.500 9" fill="none" stroke="#222" stroke-width="1.100"/><circle cx="13.800" cy="13.800" r="1.400" fill="#222"/></svg>
<svg style="left:1216px;top:745px" width="20" height="17" viewBox="0 0 20 17"><path d="M1.500 6h3l4-4v13l-4-4h-3z" fill="none" stroke="#222" stroke-width="1.200"/><path d="M11 5.500q2 3 0 6" stroke="#222" stroke-width="1.100" fill="none"/><path d="M13.500 3.500q3.200 5 0 10" stroke="#8a8a8a" stroke-width="1" fill="none"/><path d="M16 1.800q4.200 6.700 0 13.400" stroke="#b4b4b4" stroke-width="1" fill="none"/></svg>
<span class="t" style='left:1246.00px;top:748.00px;font:12px/12px "Liberation Sans",sans-serif;color:#111;transform:scaleX(0.8106);transform-origin:0 0;'>CES</span>
<span class="t" style='left:1280.00px;top:748.00px;font:12px/12px "Liberation Sans",sans-serif;color:#111;transform:scaleX(0.9158);transform-origin:0 0;'>13:10</span>
<svg style="left:1324px;top:745px" width="18" height="18" viewBox="0 0 18 18"><path d="M1.500 1.500h15v11.500h-6l-1.500 3-1.500-3h-6z" fill="none" stroke="#111" stroke-width="1.300"/></svg>
<div class="r" style="left:1362px;top:741px;width:1px;height:27px;background:#b0b0b0;"></div>
</body></html>
